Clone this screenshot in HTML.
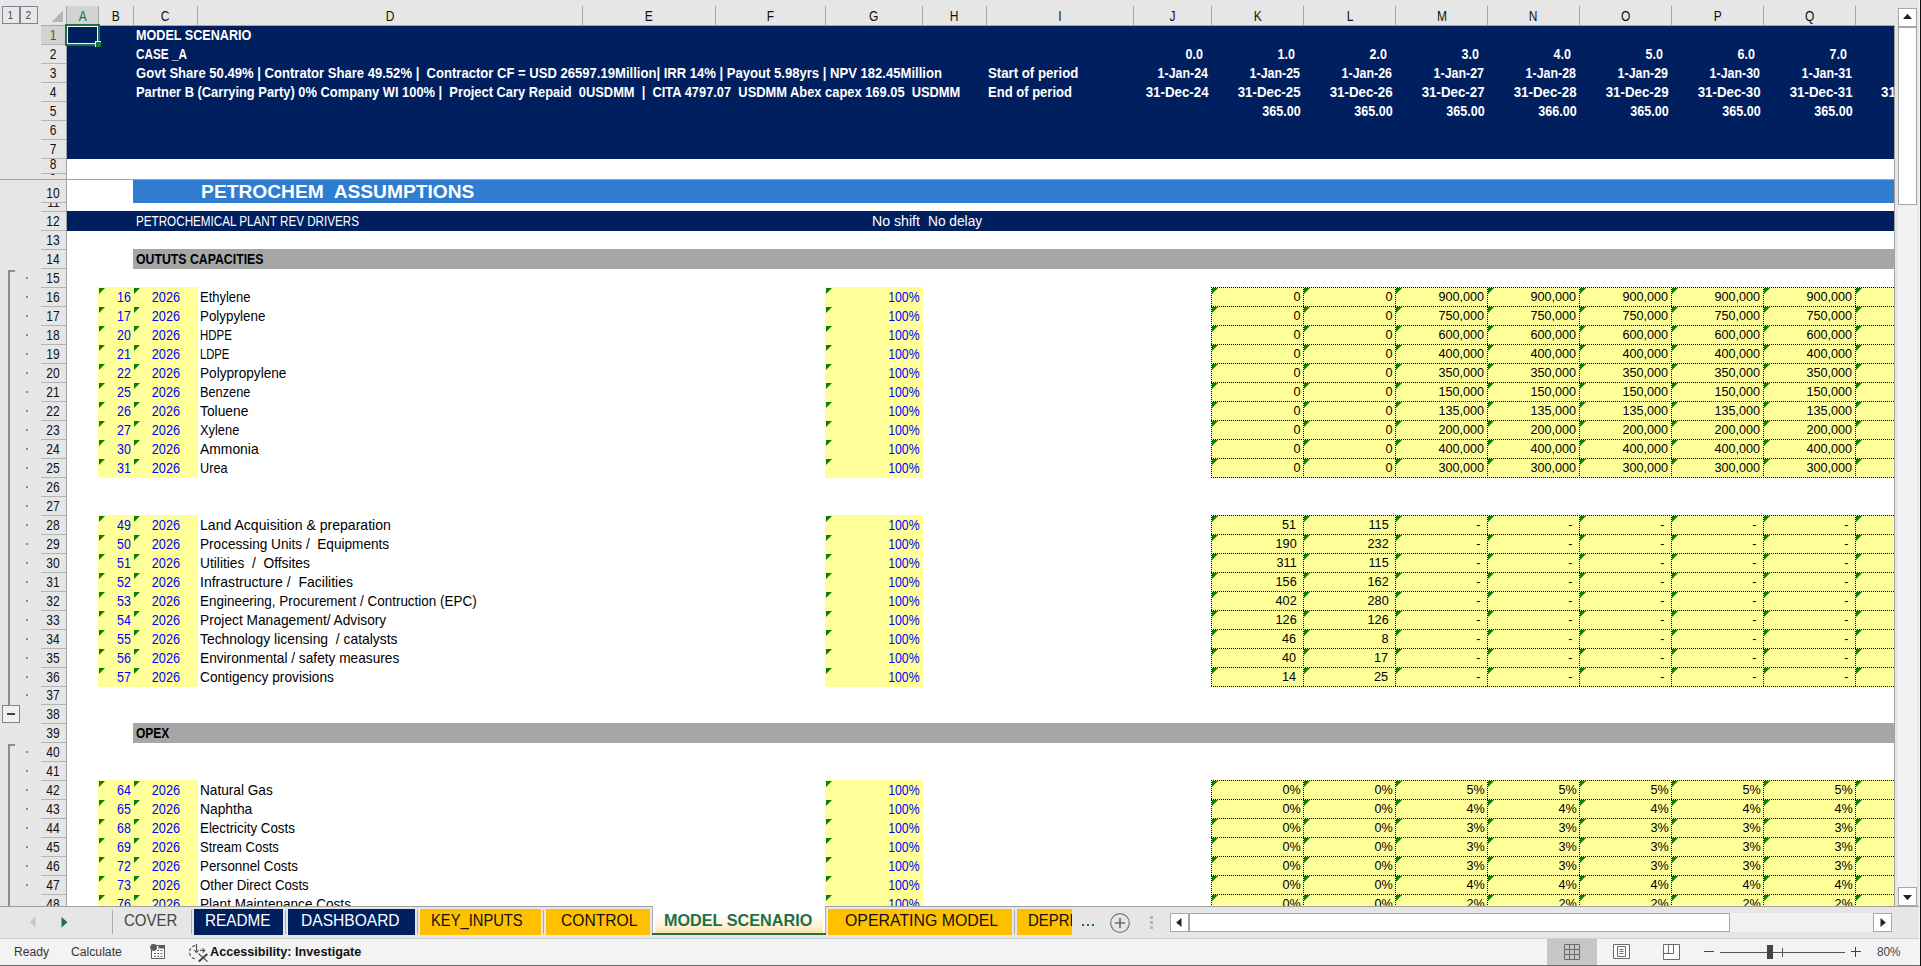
<!DOCTYPE html>
<html><head><meta charset="utf-8"><title>Model Scenario</title>
<style>
html,body{margin:0;padding:0}
body{width:1921px;height:966px;overflow:hidden;position:relative;background:#fff;font-family:"Liberation Sans",sans-serif}
div,span,svg,i{position:absolute;display:block}
.t{white-space:pre;line-height:1}
.dh{height:1px;background:repeating-linear-gradient(90deg,#000 0 1px,transparent 1px 2px)}
.dv{width:1px;background:repeating-linear-gradient(180deg,#000 0 1px,transparent 1px 2px)}
.g{width:0;height:0;border-top:6px solid #0a7d0a;border-right:6px solid transparent}
</style></head><body>
<div style="left:0px;top:0px;width:1921px;height:26px;background:#e6e6e6;"></div>
<div style="left:0px;top:26px;width:67px;height:880px;background:#e6e6e6;"></div>
<div style="left:67px;top:26px;width:1827px;height:133px;background:#001f5f;"></div>
<div style="left:133px;top:180px;width:1761px;height:23px;background:#2e7dd1;"></div>
<div style="left:67px;top:211px;width:1827px;height:20px;background:#001f5f;"></div>
<div style="left:133px;top:249px;width:1761px;height:20px;background:#a6a6a6;"></div>
<div style="left:133px;top:723px;width:1761px;height:20px;background:#a6a6a6;"></div>
<div style="left:98px;top:287px;width:100px;height:191px;background:#ffff99;"></div>
<div style="left:825px;top:287px;width:98px;height:191px;background:#ffff99;"></div>
<div style="left:1211px;top:287px;width:683px;height:191px;background:#ffff99;"></div>
<div style="left:98px;top:515px;width:100px;height:172px;background:#ffff99;"></div>
<div style="left:825px;top:515px;width:98px;height:172px;background:#ffff99;"></div>
<div style="left:1211px;top:515px;width:683px;height:172px;background:#ffff99;"></div>
<div style="left:98px;top:780px;width:100px;height:126px;background:#ffff99;"></div>
<div style="left:825px;top:780px;width:98px;height:126px;background:#ffff99;"></div>
<div style="left:1211px;top:780px;width:683px;height:126px;background:#ffff99;"></div>
<div class="dh" style="left:1211px;top:287px;width:683px"></div>
<div class="dh" style="left:1211px;top:306px;width:683px"></div>
<div class="dh" style="left:1211px;top:325px;width:683px"></div>
<div class="dh" style="left:1211px;top:344px;width:683px"></div>
<div class="dh" style="left:1211px;top:363px;width:683px"></div>
<div class="dh" style="left:1211px;top:382px;width:683px"></div>
<div class="dh" style="left:1211px;top:401px;width:683px"></div>
<div class="dh" style="left:1211px;top:420px;width:683px"></div>
<div class="dh" style="left:1211px;top:439px;width:683px"></div>
<div class="dh" style="left:1211px;top:458px;width:683px"></div>
<div class="dh" style="left:1211px;top:477px;width:683px"></div>
<div class="dv" style="left:1211px;top:287px;height:191px"></div>
<div class="dv" style="left:1303px;top:287px;height:191px"></div>
<div class="dv" style="left:1395px;top:287px;height:191px"></div>
<div class="dv" style="left:1487px;top:287px;height:191px"></div>
<div class="dv" style="left:1579px;top:287px;height:191px"></div>
<div class="dv" style="left:1671px;top:287px;height:191px"></div>
<div class="dv" style="left:1763px;top:287px;height:191px"></div>
<div class="dv" style="left:1855px;top:287px;height:191px"></div>
<div class="dh" style="left:1211px;top:515px;width:683px"></div>
<div class="dh" style="left:1211px;top:534px;width:683px"></div>
<div class="dh" style="left:1211px;top:553px;width:683px"></div>
<div class="dh" style="left:1211px;top:572px;width:683px"></div>
<div class="dh" style="left:1211px;top:591px;width:683px"></div>
<div class="dh" style="left:1211px;top:610px;width:683px"></div>
<div class="dh" style="left:1211px;top:629px;width:683px"></div>
<div class="dh" style="left:1211px;top:648px;width:683px"></div>
<div class="dh" style="left:1211px;top:667px;width:683px"></div>
<div class="dh" style="left:1211px;top:686px;width:683px"></div>
<div class="dv" style="left:1211px;top:515px;height:172px"></div>
<div class="dv" style="left:1303px;top:515px;height:172px"></div>
<div class="dv" style="left:1395px;top:515px;height:172px"></div>
<div class="dv" style="left:1487px;top:515px;height:172px"></div>
<div class="dv" style="left:1579px;top:515px;height:172px"></div>
<div class="dv" style="left:1671px;top:515px;height:172px"></div>
<div class="dv" style="left:1763px;top:515px;height:172px"></div>
<div class="dv" style="left:1855px;top:515px;height:172px"></div>
<div class="dh" style="left:1211px;top:780px;width:683px"></div>
<div class="dh" style="left:1211px;top:799px;width:683px"></div>
<div class="dh" style="left:1211px;top:818px;width:683px"></div>
<div class="dh" style="left:1211px;top:837px;width:683px"></div>
<div class="dh" style="left:1211px;top:856px;width:683px"></div>
<div class="dh" style="left:1211px;top:875px;width:683px"></div>
<div class="dh" style="left:1211px;top:894px;width:683px"></div>
<div class="dv" style="left:1211px;top:780px;height:126px"></div>
<div class="dv" style="left:1303px;top:780px;height:126px"></div>
<div class="dv" style="left:1395px;top:780px;height:126px"></div>
<div class="dv" style="left:1487px;top:780px;height:126px"></div>
<div class="dv" style="left:1579px;top:780px;height:126px"></div>
<div class="dv" style="left:1671px;top:780px;height:126px"></div>
<div class="dv" style="left:1763px;top:780px;height:126px"></div>
<div class="dv" style="left:1855px;top:780px;height:126px"></div>
<i class="g" style="left:99px;top:288px"></i>
<i class="g" style="left:134px;top:288px"></i>
<i class="g" style="left:826px;top:288px"></i>
<i class="g" style="left:1212px;top:288px"></i>
<i class="g" style="left:1304px;top:288px"></i>
<i class="g" style="left:1396px;top:288px"></i>
<i class="g" style="left:1488px;top:288px"></i>
<i class="g" style="left:1580px;top:288px"></i>
<i class="g" style="left:1672px;top:288px"></i>
<i class="g" style="left:1764px;top:288px"></i>
<i class="g" style="left:1856px;top:288px"></i>
<i class="g" style="left:99px;top:307px"></i>
<i class="g" style="left:134px;top:307px"></i>
<i class="g" style="left:826px;top:307px"></i>
<i class="g" style="left:1212px;top:307px"></i>
<i class="g" style="left:1304px;top:307px"></i>
<i class="g" style="left:1396px;top:307px"></i>
<i class="g" style="left:1488px;top:307px"></i>
<i class="g" style="left:1580px;top:307px"></i>
<i class="g" style="left:1672px;top:307px"></i>
<i class="g" style="left:1764px;top:307px"></i>
<i class="g" style="left:1856px;top:307px"></i>
<i class="g" style="left:99px;top:326px"></i>
<i class="g" style="left:134px;top:326px"></i>
<i class="g" style="left:826px;top:326px"></i>
<i class="g" style="left:1212px;top:326px"></i>
<i class="g" style="left:1304px;top:326px"></i>
<i class="g" style="left:1396px;top:326px"></i>
<i class="g" style="left:1488px;top:326px"></i>
<i class="g" style="left:1580px;top:326px"></i>
<i class="g" style="left:1672px;top:326px"></i>
<i class="g" style="left:1764px;top:326px"></i>
<i class="g" style="left:1856px;top:326px"></i>
<i class="g" style="left:99px;top:345px"></i>
<i class="g" style="left:134px;top:345px"></i>
<i class="g" style="left:826px;top:345px"></i>
<i class="g" style="left:1212px;top:345px"></i>
<i class="g" style="left:1304px;top:345px"></i>
<i class="g" style="left:1396px;top:345px"></i>
<i class="g" style="left:1488px;top:345px"></i>
<i class="g" style="left:1580px;top:345px"></i>
<i class="g" style="left:1672px;top:345px"></i>
<i class="g" style="left:1764px;top:345px"></i>
<i class="g" style="left:1856px;top:345px"></i>
<i class="g" style="left:99px;top:364px"></i>
<i class="g" style="left:134px;top:364px"></i>
<i class="g" style="left:826px;top:364px"></i>
<i class="g" style="left:1212px;top:364px"></i>
<i class="g" style="left:1304px;top:364px"></i>
<i class="g" style="left:1396px;top:364px"></i>
<i class="g" style="left:1488px;top:364px"></i>
<i class="g" style="left:1580px;top:364px"></i>
<i class="g" style="left:1672px;top:364px"></i>
<i class="g" style="left:1764px;top:364px"></i>
<i class="g" style="left:1856px;top:364px"></i>
<i class="g" style="left:99px;top:383px"></i>
<i class="g" style="left:134px;top:383px"></i>
<i class="g" style="left:826px;top:383px"></i>
<i class="g" style="left:1212px;top:383px"></i>
<i class="g" style="left:1304px;top:383px"></i>
<i class="g" style="left:1396px;top:383px"></i>
<i class="g" style="left:1488px;top:383px"></i>
<i class="g" style="left:1580px;top:383px"></i>
<i class="g" style="left:1672px;top:383px"></i>
<i class="g" style="left:1764px;top:383px"></i>
<i class="g" style="left:1856px;top:383px"></i>
<i class="g" style="left:99px;top:402px"></i>
<i class="g" style="left:134px;top:402px"></i>
<i class="g" style="left:826px;top:402px"></i>
<i class="g" style="left:1212px;top:402px"></i>
<i class="g" style="left:1304px;top:402px"></i>
<i class="g" style="left:1396px;top:402px"></i>
<i class="g" style="left:1488px;top:402px"></i>
<i class="g" style="left:1580px;top:402px"></i>
<i class="g" style="left:1672px;top:402px"></i>
<i class="g" style="left:1764px;top:402px"></i>
<i class="g" style="left:1856px;top:402px"></i>
<i class="g" style="left:99px;top:421px"></i>
<i class="g" style="left:134px;top:421px"></i>
<i class="g" style="left:826px;top:421px"></i>
<i class="g" style="left:1212px;top:421px"></i>
<i class="g" style="left:1304px;top:421px"></i>
<i class="g" style="left:1396px;top:421px"></i>
<i class="g" style="left:1488px;top:421px"></i>
<i class="g" style="left:1580px;top:421px"></i>
<i class="g" style="left:1672px;top:421px"></i>
<i class="g" style="left:1764px;top:421px"></i>
<i class="g" style="left:1856px;top:421px"></i>
<i class="g" style="left:99px;top:440px"></i>
<i class="g" style="left:134px;top:440px"></i>
<i class="g" style="left:826px;top:440px"></i>
<i class="g" style="left:1212px;top:440px"></i>
<i class="g" style="left:1304px;top:440px"></i>
<i class="g" style="left:1396px;top:440px"></i>
<i class="g" style="left:1488px;top:440px"></i>
<i class="g" style="left:1580px;top:440px"></i>
<i class="g" style="left:1672px;top:440px"></i>
<i class="g" style="left:1764px;top:440px"></i>
<i class="g" style="left:1856px;top:440px"></i>
<i class="g" style="left:99px;top:459px"></i>
<i class="g" style="left:134px;top:459px"></i>
<i class="g" style="left:826px;top:459px"></i>
<i class="g" style="left:1212px;top:459px"></i>
<i class="g" style="left:1304px;top:459px"></i>
<i class="g" style="left:1396px;top:459px"></i>
<i class="g" style="left:1488px;top:459px"></i>
<i class="g" style="left:1580px;top:459px"></i>
<i class="g" style="left:1672px;top:459px"></i>
<i class="g" style="left:1764px;top:459px"></i>
<i class="g" style="left:1856px;top:459px"></i>
<i class="g" style="left:99px;top:516px"></i>
<i class="g" style="left:134px;top:516px"></i>
<i class="g" style="left:826px;top:516px"></i>
<i class="g" style="left:1212px;top:516px"></i>
<i class="g" style="left:1304px;top:516px"></i>
<i class="g" style="left:1396px;top:516px"></i>
<i class="g" style="left:1488px;top:516px"></i>
<i class="g" style="left:1580px;top:516px"></i>
<i class="g" style="left:1672px;top:516px"></i>
<i class="g" style="left:1764px;top:516px"></i>
<i class="g" style="left:1856px;top:516px"></i>
<i class="g" style="left:99px;top:535px"></i>
<i class="g" style="left:134px;top:535px"></i>
<i class="g" style="left:826px;top:535px"></i>
<i class="g" style="left:1212px;top:535px"></i>
<i class="g" style="left:1304px;top:535px"></i>
<i class="g" style="left:1396px;top:535px"></i>
<i class="g" style="left:1488px;top:535px"></i>
<i class="g" style="left:1580px;top:535px"></i>
<i class="g" style="left:1672px;top:535px"></i>
<i class="g" style="left:1764px;top:535px"></i>
<i class="g" style="left:1856px;top:535px"></i>
<i class="g" style="left:99px;top:554px"></i>
<i class="g" style="left:134px;top:554px"></i>
<i class="g" style="left:826px;top:554px"></i>
<i class="g" style="left:1212px;top:554px"></i>
<i class="g" style="left:1304px;top:554px"></i>
<i class="g" style="left:1396px;top:554px"></i>
<i class="g" style="left:1488px;top:554px"></i>
<i class="g" style="left:1580px;top:554px"></i>
<i class="g" style="left:1672px;top:554px"></i>
<i class="g" style="left:1764px;top:554px"></i>
<i class="g" style="left:1856px;top:554px"></i>
<i class="g" style="left:99px;top:573px"></i>
<i class="g" style="left:134px;top:573px"></i>
<i class="g" style="left:826px;top:573px"></i>
<i class="g" style="left:1212px;top:573px"></i>
<i class="g" style="left:1304px;top:573px"></i>
<i class="g" style="left:1396px;top:573px"></i>
<i class="g" style="left:1488px;top:573px"></i>
<i class="g" style="left:1580px;top:573px"></i>
<i class="g" style="left:1672px;top:573px"></i>
<i class="g" style="left:1764px;top:573px"></i>
<i class="g" style="left:1856px;top:573px"></i>
<i class="g" style="left:99px;top:592px"></i>
<i class="g" style="left:134px;top:592px"></i>
<i class="g" style="left:826px;top:592px"></i>
<i class="g" style="left:1212px;top:592px"></i>
<i class="g" style="left:1304px;top:592px"></i>
<i class="g" style="left:1396px;top:592px"></i>
<i class="g" style="left:1488px;top:592px"></i>
<i class="g" style="left:1580px;top:592px"></i>
<i class="g" style="left:1672px;top:592px"></i>
<i class="g" style="left:1764px;top:592px"></i>
<i class="g" style="left:1856px;top:592px"></i>
<i class="g" style="left:99px;top:611px"></i>
<i class="g" style="left:134px;top:611px"></i>
<i class="g" style="left:826px;top:611px"></i>
<i class="g" style="left:1212px;top:611px"></i>
<i class="g" style="left:1304px;top:611px"></i>
<i class="g" style="left:1396px;top:611px"></i>
<i class="g" style="left:1488px;top:611px"></i>
<i class="g" style="left:1580px;top:611px"></i>
<i class="g" style="left:1672px;top:611px"></i>
<i class="g" style="left:1764px;top:611px"></i>
<i class="g" style="left:1856px;top:611px"></i>
<i class="g" style="left:99px;top:630px"></i>
<i class="g" style="left:134px;top:630px"></i>
<i class="g" style="left:826px;top:630px"></i>
<i class="g" style="left:1212px;top:630px"></i>
<i class="g" style="left:1304px;top:630px"></i>
<i class="g" style="left:1396px;top:630px"></i>
<i class="g" style="left:1488px;top:630px"></i>
<i class="g" style="left:1580px;top:630px"></i>
<i class="g" style="left:1672px;top:630px"></i>
<i class="g" style="left:1764px;top:630px"></i>
<i class="g" style="left:1856px;top:630px"></i>
<i class="g" style="left:99px;top:649px"></i>
<i class="g" style="left:134px;top:649px"></i>
<i class="g" style="left:826px;top:649px"></i>
<i class="g" style="left:1212px;top:649px"></i>
<i class="g" style="left:1304px;top:649px"></i>
<i class="g" style="left:1396px;top:649px"></i>
<i class="g" style="left:1488px;top:649px"></i>
<i class="g" style="left:1580px;top:649px"></i>
<i class="g" style="left:1672px;top:649px"></i>
<i class="g" style="left:1764px;top:649px"></i>
<i class="g" style="left:1856px;top:649px"></i>
<i class="g" style="left:99px;top:668px"></i>
<i class="g" style="left:134px;top:668px"></i>
<i class="g" style="left:826px;top:668px"></i>
<i class="g" style="left:1212px;top:668px"></i>
<i class="g" style="left:1304px;top:668px"></i>
<i class="g" style="left:1396px;top:668px"></i>
<i class="g" style="left:1488px;top:668px"></i>
<i class="g" style="left:1580px;top:668px"></i>
<i class="g" style="left:1672px;top:668px"></i>
<i class="g" style="left:1764px;top:668px"></i>
<i class="g" style="left:1856px;top:668px"></i>
<i class="g" style="left:99px;top:781px"></i>
<i class="g" style="left:134px;top:781px"></i>
<i class="g" style="left:826px;top:781px"></i>
<i class="g" style="left:1212px;top:781px"></i>
<i class="g" style="left:1304px;top:781px"></i>
<i class="g" style="left:1396px;top:781px"></i>
<i class="g" style="left:1488px;top:781px"></i>
<i class="g" style="left:1580px;top:781px"></i>
<i class="g" style="left:1672px;top:781px"></i>
<i class="g" style="left:1764px;top:781px"></i>
<i class="g" style="left:1856px;top:781px"></i>
<i class="g" style="left:99px;top:800px"></i>
<i class="g" style="left:134px;top:800px"></i>
<i class="g" style="left:826px;top:800px"></i>
<i class="g" style="left:1212px;top:800px"></i>
<i class="g" style="left:1304px;top:800px"></i>
<i class="g" style="left:1396px;top:800px"></i>
<i class="g" style="left:1488px;top:800px"></i>
<i class="g" style="left:1580px;top:800px"></i>
<i class="g" style="left:1672px;top:800px"></i>
<i class="g" style="left:1764px;top:800px"></i>
<i class="g" style="left:1856px;top:800px"></i>
<i class="g" style="left:99px;top:819px"></i>
<i class="g" style="left:134px;top:819px"></i>
<i class="g" style="left:826px;top:819px"></i>
<i class="g" style="left:1212px;top:819px"></i>
<i class="g" style="left:1304px;top:819px"></i>
<i class="g" style="left:1396px;top:819px"></i>
<i class="g" style="left:1488px;top:819px"></i>
<i class="g" style="left:1580px;top:819px"></i>
<i class="g" style="left:1672px;top:819px"></i>
<i class="g" style="left:1764px;top:819px"></i>
<i class="g" style="left:1856px;top:819px"></i>
<i class="g" style="left:99px;top:838px"></i>
<i class="g" style="left:134px;top:838px"></i>
<i class="g" style="left:826px;top:838px"></i>
<i class="g" style="left:1212px;top:838px"></i>
<i class="g" style="left:1304px;top:838px"></i>
<i class="g" style="left:1396px;top:838px"></i>
<i class="g" style="left:1488px;top:838px"></i>
<i class="g" style="left:1580px;top:838px"></i>
<i class="g" style="left:1672px;top:838px"></i>
<i class="g" style="left:1764px;top:838px"></i>
<i class="g" style="left:1856px;top:838px"></i>
<i class="g" style="left:99px;top:857px"></i>
<i class="g" style="left:134px;top:857px"></i>
<i class="g" style="left:826px;top:857px"></i>
<i class="g" style="left:1212px;top:857px"></i>
<i class="g" style="left:1304px;top:857px"></i>
<i class="g" style="left:1396px;top:857px"></i>
<i class="g" style="left:1488px;top:857px"></i>
<i class="g" style="left:1580px;top:857px"></i>
<i class="g" style="left:1672px;top:857px"></i>
<i class="g" style="left:1764px;top:857px"></i>
<i class="g" style="left:1856px;top:857px"></i>
<i class="g" style="left:99px;top:876px"></i>
<i class="g" style="left:134px;top:876px"></i>
<i class="g" style="left:826px;top:876px"></i>
<i class="g" style="left:1212px;top:876px"></i>
<i class="g" style="left:1304px;top:876px"></i>
<i class="g" style="left:1396px;top:876px"></i>
<i class="g" style="left:1488px;top:876px"></i>
<i class="g" style="left:1580px;top:876px"></i>
<i class="g" style="left:1672px;top:876px"></i>
<i class="g" style="left:1764px;top:876px"></i>
<i class="g" style="left:1856px;top:876px"></i>
<i class="g" style="left:99px;top:895px"></i>
<i class="g" style="left:134px;top:895px"></i>
<i class="g" style="left:826px;top:895px"></i>
<i class="g" style="left:1212px;top:895px"></i>
<i class="g" style="left:1304px;top:895px"></i>
<i class="g" style="left:1396px;top:895px"></i>
<i class="g" style="left:1488px;top:895px"></i>
<i class="g" style="left:1580px;top:895px"></i>
<i class="g" style="left:1672px;top:895px"></i>
<i class="g" style="left:1764px;top:895px"></i>
<i class="g" style="left:1856px;top:895px"></i>
<div style="left:67px;top:6px;width:31px;height:18px;background:#d2d2d2;"></div>
<div style="left:66px;top:6px;width:1px;height:19px;background:#a6a6a6"></div>
<div style="left:98px;top:6px;width:1px;height:19px;background:#a6a6a6"></div>
<div style="left:133px;top:6px;width:1px;height:19px;background:#a6a6a6"></div>
<div style="left:197px;top:6px;width:1px;height:19px;background:#a6a6a6"></div>
<div style="left:582px;top:6px;width:1px;height:19px;background:#a6a6a6"></div>
<div style="left:715px;top:6px;width:1px;height:19px;background:#a6a6a6"></div>
<div style="left:825px;top:6px;width:1px;height:19px;background:#a6a6a6"></div>
<div style="left:922px;top:6px;width:1px;height:19px;background:#a6a6a6"></div>
<div style="left:986px;top:6px;width:1px;height:19px;background:#a6a6a6"></div>
<div style="left:1133px;top:6px;width:1px;height:19px;background:#a6a6a6"></div>
<div style="left:1211px;top:6px;width:1px;height:19px;background:#a6a6a6"></div>
<div style="left:1303px;top:6px;width:1px;height:19px;background:#a6a6a6"></div>
<div style="left:1395px;top:6px;width:1px;height:19px;background:#a6a6a6"></div>
<div style="left:1487px;top:6px;width:1px;height:19px;background:#a6a6a6"></div>
<div style="left:1579px;top:6px;width:1px;height:19px;background:#a6a6a6"></div>
<div style="left:1671px;top:6px;width:1px;height:19px;background:#a6a6a6"></div>
<div style="left:1763px;top:6px;width:1px;height:19px;background:#a6a6a6"></div>
<div style="left:1855px;top:6px;width:1px;height:19px;background:#a6a6a6"></div>
<div style="left:41px;top:25px;width:1853px;height:1px;background:#a6a6a6"></div>
<span class="t" style="top:8.89px;font-size:14.3px;color:#1e7145;left:77.75px;transform-origin:50% 0;transform:scaleX(0.8400);">A</span>
<span class="t" style="top:8.89px;font-size:14.3px;color:#111;left:111.25px;transform-origin:50% 0;transform:scaleX(0.8400);">B</span>
<span class="t" style="top:8.89px;font-size:14.3px;color:#111;left:160.37px;transform-origin:50% 0;transform:scaleX(0.8400);">C</span>
<span class="t" style="top:8.89px;font-size:14.3px;color:#111;left:384.87px;transform-origin:50% 0;transform:scaleX(0.8400);">D</span>
<span class="t" style="top:8.89px;font-size:14.3px;color:#111;left:644.25px;transform-origin:50% 0;transform:scaleX(0.8400);">E</span>
<span class="t" style="top:8.89px;font-size:14.3px;color:#111;left:766.13px;transform-origin:50% 0;transform:scaleX(0.8400);">F</span>
<span class="t" style="top:8.89px;font-size:14.3px;color:#111;left:868.44px;transform-origin:50% 0;transform:scaleX(0.8400);">G</span>
<span class="t" style="top:8.89px;font-size:14.3px;color:#111;left:949.37px;transform-origin:50% 0;transform:scaleX(0.8400);">H</span>
<span class="t" style="top:8.89px;font-size:14.3px;color:#111;left:1058.00px;transform-origin:50% 0;transform:scaleX(0.8400);">I</span>
<span class="t" style="top:8.89px;font-size:14.3px;color:#111;left:1168.94px;transform-origin:50% 0;transform:scaleX(0.8400);">J</span>
<span class="t" style="top:8.89px;font-size:14.3px;color:#111;left:1252.75px;transform-origin:50% 0;transform:scaleX(0.8400);">K</span>
<span class="t" style="top:8.89px;font-size:14.3px;color:#111;left:1345.56px;transform-origin:50% 0;transform:scaleX(0.8400);">L</span>
<span class="t" style="top:8.89px;font-size:14.3px;color:#111;left:1435.56px;transform-origin:50% 0;transform:scaleX(0.8400);">M</span>
<span class="t" style="top:8.89px;font-size:14.3px;color:#111;left:1528.37px;transform-origin:50% 0;transform:scaleX(0.8400);">N</span>
<span class="t" style="top:8.89px;font-size:14.3px;color:#111;left:1619.94px;transform-origin:50% 0;transform:scaleX(0.8400);">O</span>
<span class="t" style="top:8.89px;font-size:14.3px;color:#111;left:1712.75px;transform-origin:50% 0;transform:scaleX(0.8400);">P</span>
<span class="t" style="top:8.89px;font-size:14.3px;color:#111;left:1803.94px;transform-origin:50% 0;transform:scaleX(0.8400);">Q</span>
<svg style="left:50px;top:9px" width="14" height="14"><path d="M13 1.5V13H1.5Z" fill="#b4b4b4"/></svg>
<div style="left:2px;top:6px;width:16px;height:16px;border:1px solid #7f8494;background:#e8e8e8"></div>
<span class="t" style="top:10.26px;font-size:11.5px;color:#4a4a4a;left:7.41px;transform-origin:50% 0;transform:scaleX(0.8800);">1</span>
<div style="left:20px;top:6px;width:16px;height:16px;border:1px solid #7f8494;background:#e8e8e8"></div>
<span class="t" style="top:10.26px;font-size:11.5px;color:#4a4a4a;left:25.41px;transform-origin:50% 0;transform:scaleX(0.8800);">2</span>
<div style="left:41px;top:26px;width:25px;height:18px;background:#d2d2d2;"></div>
<div style="left:41px;top:44px;width:25px;height:1px;background:#b4b4b4"></div>
<div style="left:41px;top:63px;width:25px;height:1px;background:#b4b4b4"></div>
<div style="left:41px;top:82px;width:25px;height:1px;background:#b4b4b4"></div>
<div style="left:41px;top:101px;width:25px;height:1px;background:#b4b4b4"></div>
<div style="left:41px;top:120px;width:25px;height:1px;background:#b4b4b4"></div>
<div style="left:41px;top:139px;width:25px;height:1px;background:#b4b4b4"></div>
<div style="left:41px;top:158px;width:25px;height:1px;background:#b4b4b4"></div>
<div style="left:41px;top:173px;width:25px;height:1px;background:#b4b4b4"></div>
<div style="left:41px;top:202px;width:25px;height:1px;background:#b4b4b4"></div>
<div style="left:41px;top:211px;width:25px;height:1px;background:#b4b4b4"></div>
<div style="left:41px;top:230px;width:25px;height:1px;background:#b4b4b4"></div>
<div style="left:41px;top:249px;width:25px;height:1px;background:#b4b4b4"></div>
<div style="left:41px;top:268px;width:25px;height:1px;background:#b4b4b4"></div>
<div style="left:41px;top:287px;width:25px;height:1px;background:#b4b4b4"></div>
<div style="left:41px;top:306px;width:25px;height:1px;background:#b4b4b4"></div>
<div style="left:41px;top:325px;width:25px;height:1px;background:#b4b4b4"></div>
<div style="left:41px;top:344px;width:25px;height:1px;background:#b4b4b4"></div>
<div style="left:41px;top:363px;width:25px;height:1px;background:#b4b4b4"></div>
<div style="left:41px;top:382px;width:25px;height:1px;background:#b4b4b4"></div>
<div style="left:41px;top:401px;width:25px;height:1px;background:#b4b4b4"></div>
<div style="left:41px;top:420px;width:25px;height:1px;background:#b4b4b4"></div>
<div style="left:41px;top:439px;width:25px;height:1px;background:#b4b4b4"></div>
<div style="left:41px;top:458px;width:25px;height:1px;background:#b4b4b4"></div>
<div style="left:41px;top:477px;width:25px;height:1px;background:#b4b4b4"></div>
<div style="left:41px;top:496px;width:25px;height:1px;background:#b4b4b4"></div>
<div style="left:41px;top:515px;width:25px;height:1px;background:#b4b4b4"></div>
<div style="left:41px;top:534px;width:25px;height:1px;background:#b4b4b4"></div>
<div style="left:41px;top:553px;width:25px;height:1px;background:#b4b4b4"></div>
<div style="left:41px;top:572px;width:25px;height:1px;background:#b4b4b4"></div>
<div style="left:41px;top:591px;width:25px;height:1px;background:#b4b4b4"></div>
<div style="left:41px;top:610px;width:25px;height:1px;background:#b4b4b4"></div>
<div style="left:41px;top:629px;width:25px;height:1px;background:#b4b4b4"></div>
<div style="left:41px;top:648px;width:25px;height:1px;background:#b4b4b4"></div>
<div style="left:41px;top:667px;width:25px;height:1px;background:#b4b4b4"></div>
<div style="left:41px;top:686px;width:25px;height:1px;background:#b4b4b4"></div>
<div style="left:41px;top:704px;width:25px;height:1px;background:#b4b4b4"></div>
<div style="left:41px;top:723px;width:25px;height:1px;background:#b4b4b4"></div>
<div style="left:41px;top:742px;width:25px;height:1px;background:#b4b4b4"></div>
<div style="left:41px;top:761px;width:25px;height:1px;background:#b4b4b4"></div>
<div style="left:41px;top:780px;width:25px;height:1px;background:#b4b4b4"></div>
<div style="left:41px;top:799px;width:25px;height:1px;background:#b4b4b4"></div>
<div style="left:41px;top:818px;width:25px;height:1px;background:#b4b4b4"></div>
<div style="left:41px;top:837px;width:25px;height:1px;background:#b4b4b4"></div>
<div style="left:41px;top:856px;width:25px;height:1px;background:#b4b4b4"></div>
<div style="left:41px;top:875px;width:25px;height:1px;background:#b4b4b4"></div>
<div style="left:41px;top:894px;width:25px;height:1px;background:#b4b4b4"></div>
<div style="left:66px;top:26px;width:1px;height:880px;background:#a0a0a0"></div>
<div style="left:41px;top:26px;width:25px;height:880px;overflow:hidden;">
<span class="t" style="top:1.69px;font-size:14.3px;color:#1e7145;left:8.06px;transform-origin:50% 0;transform:scaleX(0.8400);">1</span>
<span class="t" style="top:20.69px;font-size:14.3px;color:#111;left:8.06px;transform-origin:50% 0;transform:scaleX(0.8400);">2</span>
<span class="t" style="top:39.69px;font-size:14.3px;color:#111;left:8.06px;transform-origin:50% 0;transform:scaleX(0.8400);">3</span>
<span class="t" style="top:58.69px;font-size:14.3px;color:#111;left:8.06px;transform-origin:50% 0;transform:scaleX(0.8400);">4</span>
<span class="t" style="top:77.69px;font-size:14.3px;color:#111;left:8.06px;transform-origin:50% 0;transform:scaleX(0.8400);">5</span>
<span class="t" style="top:96.69px;font-size:14.3px;color:#111;left:8.06px;transform-origin:50% 0;transform:scaleX(0.8400);">6</span>
<span class="t" style="top:115.69px;font-size:14.3px;color:#111;left:8.06px;transform-origin:50% 0;transform:scaleX(0.8400);">7</span>
<span class="t" style="top:130.69px;font-size:14.3px;color:#111;left:8.06px;transform-origin:50% 0;transform:scaleX(0.8400);">8</span>
<span class="t" style="top:159.69px;font-size:14.3px;color:#111;left:4.06px;transform-origin:50% 0;transform:scaleX(0.8400);">10</span>
<span class="t" style="top:187.69px;font-size:14.3px;color:#111;left:4.06px;transform-origin:50% 0;transform:scaleX(0.8400);">12</span>
<span class="t" style="top:206.69px;font-size:14.3px;color:#111;left:4.06px;transform-origin:50% 0;transform:scaleX(0.8400);">13</span>
<span class="t" style="top:225.69px;font-size:14.3px;color:#111;left:4.06px;transform-origin:50% 0;transform:scaleX(0.8400);">14</span>
<span class="t" style="top:244.69px;font-size:14.3px;color:#111;left:4.06px;transform-origin:50% 0;transform:scaleX(0.8400);">15</span>
<span class="t" style="top:263.69px;font-size:14.3px;color:#111;left:4.06px;transform-origin:50% 0;transform:scaleX(0.8400);">16</span>
<span class="t" style="top:282.69px;font-size:14.3px;color:#111;left:4.06px;transform-origin:50% 0;transform:scaleX(0.8400);">17</span>
<span class="t" style="top:301.69px;font-size:14.3px;color:#111;left:4.06px;transform-origin:50% 0;transform:scaleX(0.8400);">18</span>
<span class="t" style="top:320.69px;font-size:14.3px;color:#111;left:4.06px;transform-origin:50% 0;transform:scaleX(0.8400);">19</span>
<span class="t" style="top:339.69px;font-size:14.3px;color:#111;left:4.06px;transform-origin:50% 0;transform:scaleX(0.8400);">20</span>
<span class="t" style="top:358.69px;font-size:14.3px;color:#111;left:4.06px;transform-origin:50% 0;transform:scaleX(0.8400);">21</span>
<span class="t" style="top:377.69px;font-size:14.3px;color:#111;left:4.06px;transform-origin:50% 0;transform:scaleX(0.8400);">22</span>
<span class="t" style="top:396.69px;font-size:14.3px;color:#111;left:4.06px;transform-origin:50% 0;transform:scaleX(0.8400);">23</span>
<span class="t" style="top:415.69px;font-size:14.3px;color:#111;left:4.06px;transform-origin:50% 0;transform:scaleX(0.8400);">24</span>
<span class="t" style="top:434.69px;font-size:14.3px;color:#111;left:4.06px;transform-origin:50% 0;transform:scaleX(0.8400);">25</span>
<span class="t" style="top:453.69px;font-size:14.3px;color:#111;left:4.06px;transform-origin:50% 0;transform:scaleX(0.8400);">26</span>
<span class="t" style="top:472.69px;font-size:14.3px;color:#111;left:4.06px;transform-origin:50% 0;transform:scaleX(0.8400);">27</span>
<span class="t" style="top:491.69px;font-size:14.3px;color:#111;left:4.06px;transform-origin:50% 0;transform:scaleX(0.8400);">28</span>
<span class="t" style="top:510.69px;font-size:14.3px;color:#111;left:4.06px;transform-origin:50% 0;transform:scaleX(0.8400);">29</span>
<span class="t" style="top:529.69px;font-size:14.3px;color:#111;left:4.06px;transform-origin:50% 0;transform:scaleX(0.8400);">30</span>
<span class="t" style="top:548.69px;font-size:14.3px;color:#111;left:4.06px;transform-origin:50% 0;transform:scaleX(0.8400);">31</span>
<span class="t" style="top:567.69px;font-size:14.3px;color:#111;left:4.06px;transform-origin:50% 0;transform:scaleX(0.8400);">32</span>
<span class="t" style="top:586.69px;font-size:14.3px;color:#111;left:4.06px;transform-origin:50% 0;transform:scaleX(0.8400);">33</span>
<span class="t" style="top:605.69px;font-size:14.3px;color:#111;left:4.06px;transform-origin:50% 0;transform:scaleX(0.8400);">34</span>
<span class="t" style="top:624.69px;font-size:14.3px;color:#111;left:4.06px;transform-origin:50% 0;transform:scaleX(0.8400);">35</span>
<span class="t" style="top:643.69px;font-size:14.3px;color:#111;left:4.06px;transform-origin:50% 0;transform:scaleX(0.8400);">36</span>
<span class="t" style="top:661.69px;font-size:14.3px;color:#111;left:4.06px;transform-origin:50% 0;transform:scaleX(0.8400);">37</span>
<span class="t" style="top:680.69px;font-size:14.3px;color:#111;left:4.06px;transform-origin:50% 0;transform:scaleX(0.8400);">38</span>
<span class="t" style="top:699.69px;font-size:14.3px;color:#111;left:4.06px;transform-origin:50% 0;transform:scaleX(0.8400);">39</span>
<span class="t" style="top:718.69px;font-size:14.3px;color:#111;left:4.06px;transform-origin:50% 0;transform:scaleX(0.8400);">40</span>
<span class="t" style="top:737.69px;font-size:14.3px;color:#111;left:4.06px;transform-origin:50% 0;transform:scaleX(0.8400);">41</span>
<span class="t" style="top:756.69px;font-size:14.3px;color:#111;left:4.06px;transform-origin:50% 0;transform:scaleX(0.8400);">42</span>
<span class="t" style="top:775.69px;font-size:14.3px;color:#111;left:4.06px;transform-origin:50% 0;transform:scaleX(0.8400);">43</span>
<span class="t" style="top:794.69px;font-size:14.3px;color:#111;left:4.06px;transform-origin:50% 0;transform:scaleX(0.8400);">44</span>
<span class="t" style="top:813.69px;font-size:14.3px;color:#111;left:4.06px;transform-origin:50% 0;transform:scaleX(0.8400);">45</span>
<span class="t" style="top:832.69px;font-size:14.3px;color:#111;left:4.06px;transform-origin:50% 0;transform:scaleX(0.8400);">46</span>
<span class="t" style="top:851.69px;font-size:14.3px;color:#111;left:4.06px;transform-origin:50% 0;transform:scaleX(0.8400);">47</span>
<span class="t" style="top:870.69px;font-size:14.3px;color:#111;left:4.06px;transform-origin:50% 0;transform:scaleX(0.8400);">48</span>
</div>
<div style="left:41px;top:203px;width:25px;height:8px;overflow:hidden;">
<span class="t" style="top:-8.31px;font-size:14.3px;color:#222;left:4.62px;transform-origin:50% 0;transform:scaleX(0.8400);">11</span>
</div>
<div style="left:41px;top:174px;width:25px;height:5px;overflow:hidden;">
<span class="t" style="top:-10.91px;font-size:14.3px;color:#222;left:8.06px;transform-origin:50% 0;transform:scaleX(0.8400);">9</span>
</div>
<div style="left:0;top:179px;width:1894px;height:1px;background:#a0a0a0"></div>
<div style="left:8px;top:270px;width:2px;height:435px;background:#8c8c8c;"></div>
<div style="left:8px;top:270px;width:7px;height:2px;background:#8c8c8c;"></div>
<div style="left:8px;top:744px;width:2px;height:162px;background:#8c8c8c;"></div>
<div style="left:8px;top:744px;width:7px;height:2px;background:#8c8c8c;"></div>
<div style="left:2px;top:705px;width:16px;height:16px;border:1px solid #7f8494;background:#f0f0f0"></div>
<div style="left:7px;top:713px;width:8px;height:2px;background:#444;"></div>
<div style="left:26px;top:277px;width:2px;height:2px;background:#8c8c8c;"></div>
<div style="left:26px;top:296px;width:2px;height:2px;background:#8c8c8c;"></div>
<div style="left:26px;top:315px;width:2px;height:2px;background:#8c8c8c;"></div>
<div style="left:26px;top:334px;width:2px;height:2px;background:#8c8c8c;"></div>
<div style="left:26px;top:353px;width:2px;height:2px;background:#8c8c8c;"></div>
<div style="left:26px;top:372px;width:2px;height:2px;background:#8c8c8c;"></div>
<div style="left:26px;top:391px;width:2px;height:2px;background:#8c8c8c;"></div>
<div style="left:26px;top:410px;width:2px;height:2px;background:#8c8c8c;"></div>
<div style="left:26px;top:429px;width:2px;height:2px;background:#8c8c8c;"></div>
<div style="left:26px;top:448px;width:2px;height:2px;background:#8c8c8c;"></div>
<div style="left:26px;top:467px;width:2px;height:2px;background:#8c8c8c;"></div>
<div style="left:26px;top:486px;width:2px;height:2px;background:#8c8c8c;"></div>
<div style="left:26px;top:505px;width:2px;height:2px;background:#8c8c8c;"></div>
<div style="left:26px;top:524px;width:2px;height:2px;background:#8c8c8c;"></div>
<div style="left:26px;top:543px;width:2px;height:2px;background:#8c8c8c;"></div>
<div style="left:26px;top:562px;width:2px;height:2px;background:#8c8c8c;"></div>
<div style="left:26px;top:581px;width:2px;height:2px;background:#8c8c8c;"></div>
<div style="left:26px;top:600px;width:2px;height:2px;background:#8c8c8c;"></div>
<div style="left:26px;top:619px;width:2px;height:2px;background:#8c8c8c;"></div>
<div style="left:26px;top:638px;width:2px;height:2px;background:#8c8c8c;"></div>
<div style="left:26px;top:657px;width:2px;height:2px;background:#8c8c8c;"></div>
<div style="left:26px;top:676px;width:2px;height:2px;background:#8c8c8c;"></div>
<div style="left:26px;top:694px;width:2px;height:2px;background:#8c8c8c;"></div>
<div style="left:26px;top:751px;width:2px;height:2px;background:#8c8c8c;"></div>
<div style="left:26px;top:770px;width:2px;height:2px;background:#8c8c8c;"></div>
<div style="left:26px;top:789px;width:2px;height:2px;background:#8c8c8c;"></div>
<div style="left:26px;top:808px;width:2px;height:2px;background:#8c8c8c;"></div>
<div style="left:26px;top:827px;width:2px;height:2px;background:#8c8c8c;"></div>
<div style="left:26px;top:846px;width:2px;height:2px;background:#8c8c8c;"></div>
<div style="left:26px;top:865px;width:2px;height:2px;background:#8c8c8c;"></div>
<div style="left:26px;top:884px;width:2px;height:2px;background:#8c8c8c;"></div>
<div style="left:67px;top:26px;width:1827px;height:880px;overflow:hidden;">
<span class="t" style="top:1.89px;font-size:14.3px;color:#fff;font-weight:700;left:69.10px;transform-origin:0 0;transform:scaleX(0.8821);">MODEL SCENARIO</span>
<span class="t" style="top:20.89px;font-size:14.3px;color:#fff;font-weight:700;left:69.10px;transform-origin:0 0;transform:scaleX(0.8227);">CASE _A</span>
<span class="t" style="top:39.89px;font-size:14.3px;color:#fff;font-weight:700;left:69.10px;transform-origin:0 0;transform:scaleX(0.9140);">Govt Share 50.49% | Contrator Share 49.52% |  Contractor CF = USD 26597.19Million| IRR 14% | Payout 5.98yrs | NPV 182.45Million</span>
<span class="t" style="top:58.89px;font-size:14.3px;color:#fff;font-weight:700;left:69.10px;transform-origin:0 0;transform:scaleX(0.9003);">Partner B (Carrying Party) 0% Company WI 100% |  Project Cary Repaid  0USDMM  |  CITA 4797.07  USDMM Abex capex 169.05  USDMM</span>
<span class="t" style="top:39.89px;font-size:14.3px;color:#fff;font-weight:700;left:921.40px;transform-origin:0 0;transform:scaleX(0.9243);">Start of period</span>
<span class="t" style="top:58.89px;font-size:14.3px;color:#fff;font-weight:700;left:921.40px;transform-origin:0 0;transform:scaleX(0.9110);">End of period</span>
<span class="t" style="top:20.89px;font-size:14.3px;color:#fff;font-weight:700;right:690.75px;transform-origin:100% 0;transform:scaleX(0.8759);">0.0</span>
<span class="t" style="top:39.89px;font-size:14.3px;color:#fff;font-weight:700;right:685.54px;transform-origin:100% 0;transform:scaleX(0.8691);">1-Jan-24</span>
<span class="t" style="top:58.89px;font-size:14.3px;color:#fff;font-weight:700;right:685.53px;transform-origin:100% 0;transform:scaleX(0.9306);">31-Dec-24</span>
<span class="t" style="top:20.89px;font-size:14.3px;color:#fff;font-weight:700;right:598.75px;transform-origin:100% 0;transform:scaleX(0.8759);">1.0</span>
<span class="t" style="top:39.89px;font-size:14.3px;color:#fff;font-weight:700;right:593.54px;transform-origin:100% 0;transform:scaleX(0.8691);">1-Jan-25</span>
<span class="t" style="top:58.89px;font-size:14.3px;color:#fff;font-weight:700;right:593.53px;transform-origin:100% 0;transform:scaleX(0.9306);">31-Dec-25</span>
<span class="t" style="top:77.89px;font-size:14.3px;color:#fff;font-weight:700;right:593.63px;transform-origin:100% 0;transform:scaleX(0.8779);">365.00</span>
<span class="t" style="top:20.89px;font-size:14.3px;color:#fff;font-weight:700;right:506.75px;transform-origin:100% 0;transform:scaleX(0.8759);">2.0</span>
<span class="t" style="top:39.89px;font-size:14.3px;color:#fff;font-weight:700;right:501.54px;transform-origin:100% 0;transform:scaleX(0.8691);">1-Jan-26</span>
<span class="t" style="top:58.89px;font-size:14.3px;color:#fff;font-weight:700;right:501.53px;transform-origin:100% 0;transform:scaleX(0.9306);">31-Dec-26</span>
<span class="t" style="top:77.89px;font-size:14.3px;color:#fff;font-weight:700;right:501.63px;transform-origin:100% 0;transform:scaleX(0.8779);">365.00</span>
<span class="t" style="top:20.89px;font-size:14.3px;color:#fff;font-weight:700;right:414.75px;transform-origin:100% 0;transform:scaleX(0.8759);">3.0</span>
<span class="t" style="top:39.89px;font-size:14.3px;color:#fff;font-weight:700;right:409.54px;transform-origin:100% 0;transform:scaleX(0.8691);">1-Jan-27</span>
<span class="t" style="top:58.89px;font-size:14.3px;color:#fff;font-weight:700;right:409.53px;transform-origin:100% 0;transform:scaleX(0.9306);">31-Dec-27</span>
<span class="t" style="top:77.89px;font-size:14.3px;color:#fff;font-weight:700;right:409.63px;transform-origin:100% 0;transform:scaleX(0.8779);">365.00</span>
<span class="t" style="top:20.89px;font-size:14.3px;color:#fff;font-weight:700;right:322.75px;transform-origin:100% 0;transform:scaleX(0.8759);">4.0</span>
<span class="t" style="top:39.89px;font-size:14.3px;color:#fff;font-weight:700;right:317.54px;transform-origin:100% 0;transform:scaleX(0.8691);">1-Jan-28</span>
<span class="t" style="top:58.89px;font-size:14.3px;color:#fff;font-weight:700;right:317.53px;transform-origin:100% 0;transform:scaleX(0.9306);">31-Dec-28</span>
<span class="t" style="top:77.89px;font-size:14.3px;color:#fff;font-weight:700;right:317.63px;transform-origin:100% 0;transform:scaleX(0.8779);">366.00</span>
<span class="t" style="top:20.89px;font-size:14.3px;color:#fff;font-weight:700;right:230.75px;transform-origin:100% 0;transform:scaleX(0.8759);">5.0</span>
<span class="t" style="top:39.89px;font-size:14.3px;color:#fff;font-weight:700;right:225.54px;transform-origin:100% 0;transform:scaleX(0.8691);">1-Jan-29</span>
<span class="t" style="top:58.89px;font-size:14.3px;color:#fff;font-weight:700;right:225.53px;transform-origin:100% 0;transform:scaleX(0.9306);">31-Dec-29</span>
<span class="t" style="top:77.89px;font-size:14.3px;color:#fff;font-weight:700;right:225.63px;transform-origin:100% 0;transform:scaleX(0.8779);">365.00</span>
<span class="t" style="top:20.89px;font-size:14.3px;color:#fff;font-weight:700;right:138.75px;transform-origin:100% 0;transform:scaleX(0.8759);">6.0</span>
<span class="t" style="top:39.89px;font-size:14.3px;color:#fff;font-weight:700;right:133.54px;transform-origin:100% 0;transform:scaleX(0.8691);">1-Jan-30</span>
<span class="t" style="top:58.89px;font-size:14.3px;color:#fff;font-weight:700;right:133.53px;transform-origin:100% 0;transform:scaleX(0.9306);">31-Dec-30</span>
<span class="t" style="top:77.89px;font-size:14.3px;color:#fff;font-weight:700;right:133.63px;transform-origin:100% 0;transform:scaleX(0.8779);">365.00</span>
<span class="t" style="top:20.89px;font-size:14.3px;color:#fff;font-weight:700;right:46.75px;transform-origin:100% 0;transform:scaleX(0.8759);">7.0</span>
<span class="t" style="top:39.89px;font-size:14.3px;color:#fff;font-weight:700;right:41.54px;transform-origin:100% 0;transform:scaleX(0.8691);">1-Jan-31</span>
<span class="t" style="top:58.89px;font-size:14.3px;color:#fff;font-weight:700;right:41.53px;transform-origin:100% 0;transform:scaleX(0.9306);">31-Dec-31</span>
<span class="t" style="top:77.89px;font-size:14.3px;color:#fff;font-weight:700;right:41.63px;transform-origin:100% 0;transform:scaleX(0.8779);">365.00</span>
<span class="t" style="top:58.89px;font-size:14.3px;color:#fff;font-weight:700;left:1814.00px;transform-origin:0 0;transform:scaleX(0.9306);">31-Dec-32</span>
<span class="t" style="top:155.94px;font-size:19.2px;color:#fff;font-weight:700;left:134.10px;transform-origin:0 0;">PETROCHEM  ASSUMPTIONS</span>
<span class="t" style="top:187.89px;font-size:14.3px;color:#fff;left:69.10px;transform-origin:0 0;transform:scaleX(0.8162);">PETROCHEMICAL PLANT REV DRIVERS</span>
<span class="t" style="top:187.89px;font-size:14.3px;color:#fff;left:804.70px;transform-origin:0 0;transform:scaleX(0.9886);">No shift</span>
<span class="t" style="top:187.89px;font-size:14.3px;color:#fff;left:860.70px;transform-origin:0 0;transform:scaleX(0.9600);">No delay</span>
<span class="t" style="top:225.89px;font-size:14.3px;color:#000;font-weight:700;left:69.10px;transform-origin:0 0;transform:scaleX(0.8596);">OUTUTS CAPACITIES</span>
<span class="t" style="top:699.89px;font-size:14.3px;color:#000;font-weight:700;left:68.80px;transform-origin:0 0;transform:scaleX(0.8379);">OPEX</span>
<span class="t" style="top:263.89px;font-size:14.3px;color:#0000ff;right:1763.32px;transform-origin:100% 0;transform:scaleX(0.8700);">16</span>
<span class="t" style="top:263.89px;font-size:14.3px;color:#0000ff;left:82.73px;transform-origin:50% 0;transform:scaleX(0.8882);">2026</span>
<span class="t" style="top:263.89px;font-size:14.3px;color:#000;left:133.20px;transform-origin:0 0;transform:scaleX(0.9045);">Ethylene</span>
<span class="t" style="top:263.89px;font-size:14.3px;color:#0000ff;right:974.25px;transform-origin:100% 0;transform:scaleX(0.8575);">100%</span>
<span class="t" style="top:264.48px;font-size:13.6px;color:#000;right:593.64px;transform-origin:100% 0;transform:scaleX(0.9300);">0</span>
<span class="t" style="top:264.48px;font-size:13.6px;color:#000;right:501.64px;transform-origin:100% 0;transform:scaleX(0.9300);">0</span>
<span class="t" style="top:264.48px;font-size:13.6px;color:#000;right:409.60px;transform-origin:100% 0;transform:scaleX(0.9300);">900,000</span>
<span class="t" style="top:264.48px;font-size:13.6px;color:#000;right:317.60px;transform-origin:100% 0;transform:scaleX(0.9300);">900,000</span>
<span class="t" style="top:264.48px;font-size:13.6px;color:#000;right:225.60px;transform-origin:100% 0;transform:scaleX(0.9300);">900,000</span>
<span class="t" style="top:264.48px;font-size:13.6px;color:#000;right:133.60px;transform-origin:100% 0;transform:scaleX(0.9300);">900,000</span>
<span class="t" style="top:264.48px;font-size:13.6px;color:#000;right:41.60px;transform-origin:100% 0;transform:scaleX(0.9300);">900,000</span>
<span class="t" style="top:282.89px;font-size:14.3px;color:#0000ff;right:1763.32px;transform-origin:100% 0;transform:scaleX(0.8700);">17</span>
<span class="t" style="top:282.89px;font-size:14.3px;color:#0000ff;left:82.73px;transform-origin:50% 0;transform:scaleX(0.8882);">2026</span>
<span class="t" style="top:282.89px;font-size:14.3px;color:#000;left:133.20px;transform-origin:0 0;transform:scaleX(0.9348);">Polypylene</span>
<span class="t" style="top:282.89px;font-size:14.3px;color:#0000ff;right:974.25px;transform-origin:100% 0;transform:scaleX(0.8575);">100%</span>
<span class="t" style="top:283.48px;font-size:13.6px;color:#000;right:593.64px;transform-origin:100% 0;transform:scaleX(0.9300);">0</span>
<span class="t" style="top:283.48px;font-size:13.6px;color:#000;right:501.64px;transform-origin:100% 0;transform:scaleX(0.9300);">0</span>
<span class="t" style="top:283.48px;font-size:13.6px;color:#000;right:409.60px;transform-origin:100% 0;transform:scaleX(0.9300);">750,000</span>
<span class="t" style="top:283.48px;font-size:13.6px;color:#000;right:317.60px;transform-origin:100% 0;transform:scaleX(0.9300);">750,000</span>
<span class="t" style="top:283.48px;font-size:13.6px;color:#000;right:225.60px;transform-origin:100% 0;transform:scaleX(0.9300);">750,000</span>
<span class="t" style="top:283.48px;font-size:13.6px;color:#000;right:133.60px;transform-origin:100% 0;transform:scaleX(0.9300);">750,000</span>
<span class="t" style="top:283.48px;font-size:13.6px;color:#000;right:41.60px;transform-origin:100% 0;transform:scaleX(0.9300);">750,000</span>
<span class="t" style="top:301.89px;font-size:14.3px;color:#0000ff;right:1763.32px;transform-origin:100% 0;transform:scaleX(0.8700);">20</span>
<span class="t" style="top:301.89px;font-size:14.3px;color:#0000ff;left:82.73px;transform-origin:50% 0;transform:scaleX(0.8882);">2026</span>
<span class="t" style="top:301.89px;font-size:14.3px;color:#000;left:133.20px;transform-origin:0 0;transform:scaleX(0.8000);">HDPE</span>
<span class="t" style="top:301.89px;font-size:14.3px;color:#0000ff;right:974.25px;transform-origin:100% 0;transform:scaleX(0.8575);">100%</span>
<span class="t" style="top:302.48px;font-size:13.6px;color:#000;right:593.64px;transform-origin:100% 0;transform:scaleX(0.9300);">0</span>
<span class="t" style="top:302.48px;font-size:13.6px;color:#000;right:501.64px;transform-origin:100% 0;transform:scaleX(0.9300);">0</span>
<span class="t" style="top:302.48px;font-size:13.6px;color:#000;right:409.60px;transform-origin:100% 0;transform:scaleX(0.9300);">600,000</span>
<span class="t" style="top:302.48px;font-size:13.6px;color:#000;right:317.60px;transform-origin:100% 0;transform:scaleX(0.9300);">600,000</span>
<span class="t" style="top:302.48px;font-size:13.6px;color:#000;right:225.60px;transform-origin:100% 0;transform:scaleX(0.9300);">600,000</span>
<span class="t" style="top:302.48px;font-size:13.6px;color:#000;right:133.60px;transform-origin:100% 0;transform:scaleX(0.9300);">600,000</span>
<span class="t" style="top:302.48px;font-size:13.6px;color:#000;right:41.60px;transform-origin:100% 0;transform:scaleX(0.9300);">600,000</span>
<span class="t" style="top:320.89px;font-size:14.3px;color:#0000ff;right:1763.32px;transform-origin:100% 0;transform:scaleX(0.8700);">21</span>
<span class="t" style="top:320.89px;font-size:14.3px;color:#0000ff;left:82.73px;transform-origin:50% 0;transform:scaleX(0.8882);">2026</span>
<span class="t" style="top:320.89px;font-size:14.3px;color:#000;left:133.20px;transform-origin:0 0;transform:scaleX(0.7839);">LDPE</span>
<span class="t" style="top:320.89px;font-size:14.3px;color:#0000ff;right:974.25px;transform-origin:100% 0;transform:scaleX(0.8575);">100%</span>
<span class="t" style="top:321.48px;font-size:13.6px;color:#000;right:593.64px;transform-origin:100% 0;transform:scaleX(0.9300);">0</span>
<span class="t" style="top:321.48px;font-size:13.6px;color:#000;right:501.64px;transform-origin:100% 0;transform:scaleX(0.9300);">0</span>
<span class="t" style="top:321.48px;font-size:13.6px;color:#000;right:409.60px;transform-origin:100% 0;transform:scaleX(0.9300);">400,000</span>
<span class="t" style="top:321.48px;font-size:13.6px;color:#000;right:317.60px;transform-origin:100% 0;transform:scaleX(0.9300);">400,000</span>
<span class="t" style="top:321.48px;font-size:13.6px;color:#000;right:225.60px;transform-origin:100% 0;transform:scaleX(0.9300);">400,000</span>
<span class="t" style="top:321.48px;font-size:13.6px;color:#000;right:133.60px;transform-origin:100% 0;transform:scaleX(0.9300);">400,000</span>
<span class="t" style="top:321.48px;font-size:13.6px;color:#000;right:41.60px;transform-origin:100% 0;transform:scaleX(0.9300);">400,000</span>
<span class="t" style="top:339.89px;font-size:14.3px;color:#0000ff;right:1763.32px;transform-origin:100% 0;transform:scaleX(0.8700);">22</span>
<span class="t" style="top:339.89px;font-size:14.3px;color:#0000ff;left:82.73px;transform-origin:50% 0;transform:scaleX(0.8882);">2026</span>
<span class="t" style="top:339.89px;font-size:14.3px;color:#000;left:133.20px;transform-origin:0 0;transform:scaleX(0.9538);">Polypropylene</span>
<span class="t" style="top:339.89px;font-size:14.3px;color:#0000ff;right:974.25px;transform-origin:100% 0;transform:scaleX(0.8575);">100%</span>
<span class="t" style="top:340.48px;font-size:13.6px;color:#000;right:593.64px;transform-origin:100% 0;transform:scaleX(0.9300);">0</span>
<span class="t" style="top:340.48px;font-size:13.6px;color:#000;right:501.64px;transform-origin:100% 0;transform:scaleX(0.9300);">0</span>
<span class="t" style="top:340.48px;font-size:13.6px;color:#000;right:409.60px;transform-origin:100% 0;transform:scaleX(0.9300);">350,000</span>
<span class="t" style="top:340.48px;font-size:13.6px;color:#000;right:317.60px;transform-origin:100% 0;transform:scaleX(0.9300);">350,000</span>
<span class="t" style="top:340.48px;font-size:13.6px;color:#000;right:225.60px;transform-origin:100% 0;transform:scaleX(0.9300);">350,000</span>
<span class="t" style="top:340.48px;font-size:13.6px;color:#000;right:133.60px;transform-origin:100% 0;transform:scaleX(0.9300);">350,000</span>
<span class="t" style="top:340.48px;font-size:13.6px;color:#000;right:41.60px;transform-origin:100% 0;transform:scaleX(0.9300);">350,000</span>
<span class="t" style="top:358.89px;font-size:14.3px;color:#0000ff;right:1763.32px;transform-origin:100% 0;transform:scaleX(0.8700);">25</span>
<span class="t" style="top:358.89px;font-size:14.3px;color:#0000ff;left:82.73px;transform-origin:50% 0;transform:scaleX(0.8882);">2026</span>
<span class="t" style="top:358.89px;font-size:14.3px;color:#000;left:133.20px;transform-origin:0 0;transform:scaleX(0.8924);">Benzene</span>
<span class="t" style="top:358.89px;font-size:14.3px;color:#0000ff;right:974.25px;transform-origin:100% 0;transform:scaleX(0.8575);">100%</span>
<span class="t" style="top:359.48px;font-size:13.6px;color:#000;right:593.64px;transform-origin:100% 0;transform:scaleX(0.9300);">0</span>
<span class="t" style="top:359.48px;font-size:13.6px;color:#000;right:501.64px;transform-origin:100% 0;transform:scaleX(0.9300);">0</span>
<span class="t" style="top:359.48px;font-size:13.6px;color:#000;right:409.60px;transform-origin:100% 0;transform:scaleX(0.9300);">150,000</span>
<span class="t" style="top:359.48px;font-size:13.6px;color:#000;right:317.60px;transform-origin:100% 0;transform:scaleX(0.9300);">150,000</span>
<span class="t" style="top:359.48px;font-size:13.6px;color:#000;right:225.60px;transform-origin:100% 0;transform:scaleX(0.9300);">150,000</span>
<span class="t" style="top:359.48px;font-size:13.6px;color:#000;right:133.60px;transform-origin:100% 0;transform:scaleX(0.9300);">150,000</span>
<span class="t" style="top:359.48px;font-size:13.6px;color:#000;right:41.60px;transform-origin:100% 0;transform:scaleX(0.9300);">150,000</span>
<span class="t" style="top:377.89px;font-size:14.3px;color:#0000ff;right:1763.32px;transform-origin:100% 0;transform:scaleX(0.8700);">26</span>
<span class="t" style="top:377.89px;font-size:14.3px;color:#0000ff;left:82.73px;transform-origin:50% 0;transform:scaleX(0.8882);">2026</span>
<span class="t" style="top:377.89px;font-size:14.3px;color:#000;left:133.20px;transform-origin:0 0;transform:scaleX(0.9664);">Toluene</span>
<span class="t" style="top:377.89px;font-size:14.3px;color:#0000ff;right:974.25px;transform-origin:100% 0;transform:scaleX(0.8575);">100%</span>
<span class="t" style="top:378.48px;font-size:13.6px;color:#000;right:593.64px;transform-origin:100% 0;transform:scaleX(0.9300);">0</span>
<span class="t" style="top:378.48px;font-size:13.6px;color:#000;right:501.64px;transform-origin:100% 0;transform:scaleX(0.9300);">0</span>
<span class="t" style="top:378.48px;font-size:13.6px;color:#000;right:409.60px;transform-origin:100% 0;transform:scaleX(0.9300);">135,000</span>
<span class="t" style="top:378.48px;font-size:13.6px;color:#000;right:317.60px;transform-origin:100% 0;transform:scaleX(0.9300);">135,000</span>
<span class="t" style="top:378.48px;font-size:13.6px;color:#000;right:225.60px;transform-origin:100% 0;transform:scaleX(0.9300);">135,000</span>
<span class="t" style="top:378.48px;font-size:13.6px;color:#000;right:133.60px;transform-origin:100% 0;transform:scaleX(0.9300);">135,000</span>
<span class="t" style="top:378.48px;font-size:13.6px;color:#000;right:41.60px;transform-origin:100% 0;transform:scaleX(0.9300);">135,000</span>
<span class="t" style="top:396.89px;font-size:14.3px;color:#0000ff;right:1763.32px;transform-origin:100% 0;transform:scaleX(0.8700);">27</span>
<span class="t" style="top:396.89px;font-size:14.3px;color:#0000ff;left:82.73px;transform-origin:50% 0;transform:scaleX(0.8882);">2026</span>
<span class="t" style="top:396.89px;font-size:14.3px;color:#000;left:133.20px;transform-origin:0 0;transform:scaleX(0.8986);">Xylene</span>
<span class="t" style="top:396.89px;font-size:14.3px;color:#0000ff;right:974.25px;transform-origin:100% 0;transform:scaleX(0.8575);">100%</span>
<span class="t" style="top:397.48px;font-size:13.6px;color:#000;right:593.64px;transform-origin:100% 0;transform:scaleX(0.9300);">0</span>
<span class="t" style="top:397.48px;font-size:13.6px;color:#000;right:501.64px;transform-origin:100% 0;transform:scaleX(0.9300);">0</span>
<span class="t" style="top:397.48px;font-size:13.6px;color:#000;right:409.60px;transform-origin:100% 0;transform:scaleX(0.9300);">200,000</span>
<span class="t" style="top:397.48px;font-size:13.6px;color:#000;right:317.60px;transform-origin:100% 0;transform:scaleX(0.9300);">200,000</span>
<span class="t" style="top:397.48px;font-size:13.6px;color:#000;right:225.60px;transform-origin:100% 0;transform:scaleX(0.9300);">200,000</span>
<span class="t" style="top:397.48px;font-size:13.6px;color:#000;right:133.60px;transform-origin:100% 0;transform:scaleX(0.9300);">200,000</span>
<span class="t" style="top:397.48px;font-size:13.6px;color:#000;right:41.60px;transform-origin:100% 0;transform:scaleX(0.9300);">200,000</span>
<span class="t" style="top:415.89px;font-size:14.3px;color:#0000ff;right:1763.32px;transform-origin:100% 0;transform:scaleX(0.8700);">30</span>
<span class="t" style="top:415.89px;font-size:14.3px;color:#0000ff;left:82.73px;transform-origin:50% 0;transform:scaleX(0.8882);">2026</span>
<span class="t" style="top:415.89px;font-size:14.3px;color:#000;left:133.20px;transform-origin:0 0;transform:scaleX(0.9710);">Ammonia</span>
<span class="t" style="top:415.89px;font-size:14.3px;color:#0000ff;right:974.25px;transform-origin:100% 0;transform:scaleX(0.8575);">100%</span>
<span class="t" style="top:416.48px;font-size:13.6px;color:#000;right:593.64px;transform-origin:100% 0;transform:scaleX(0.9300);">0</span>
<span class="t" style="top:416.48px;font-size:13.6px;color:#000;right:501.64px;transform-origin:100% 0;transform:scaleX(0.9300);">0</span>
<span class="t" style="top:416.48px;font-size:13.6px;color:#000;right:409.60px;transform-origin:100% 0;transform:scaleX(0.9300);">400,000</span>
<span class="t" style="top:416.48px;font-size:13.6px;color:#000;right:317.60px;transform-origin:100% 0;transform:scaleX(0.9300);">400,000</span>
<span class="t" style="top:416.48px;font-size:13.6px;color:#000;right:225.60px;transform-origin:100% 0;transform:scaleX(0.9300);">400,000</span>
<span class="t" style="top:416.48px;font-size:13.6px;color:#000;right:133.60px;transform-origin:100% 0;transform:scaleX(0.9300);">400,000</span>
<span class="t" style="top:416.48px;font-size:13.6px;color:#000;right:41.60px;transform-origin:100% 0;transform:scaleX(0.9300);">400,000</span>
<span class="t" style="top:434.89px;font-size:14.3px;color:#0000ff;right:1763.32px;transform-origin:100% 0;transform:scaleX(0.8700);">31</span>
<span class="t" style="top:434.89px;font-size:14.3px;color:#0000ff;left:82.73px;transform-origin:50% 0;transform:scaleX(0.8882);">2026</span>
<span class="t" style="top:434.89px;font-size:14.3px;color:#000;left:133.20px;transform-origin:0 0;transform:scaleX(0.8871);">Urea</span>
<span class="t" style="top:434.89px;font-size:14.3px;color:#0000ff;right:974.25px;transform-origin:100% 0;transform:scaleX(0.8575);">100%</span>
<span class="t" style="top:435.48px;font-size:13.6px;color:#000;right:593.64px;transform-origin:100% 0;transform:scaleX(0.9300);">0</span>
<span class="t" style="top:435.48px;font-size:13.6px;color:#000;right:501.64px;transform-origin:100% 0;transform:scaleX(0.9300);">0</span>
<span class="t" style="top:435.48px;font-size:13.6px;color:#000;right:409.60px;transform-origin:100% 0;transform:scaleX(0.9300);">300,000</span>
<span class="t" style="top:435.48px;font-size:13.6px;color:#000;right:317.60px;transform-origin:100% 0;transform:scaleX(0.9300);">300,000</span>
<span class="t" style="top:435.48px;font-size:13.6px;color:#000;right:225.60px;transform-origin:100% 0;transform:scaleX(0.9300);">300,000</span>
<span class="t" style="top:435.48px;font-size:13.6px;color:#000;right:133.60px;transform-origin:100% 0;transform:scaleX(0.9300);">300,000</span>
<span class="t" style="top:435.48px;font-size:13.6px;color:#000;right:41.60px;transform-origin:100% 0;transform:scaleX(0.9300);">300,000</span>
<span class="t" style="top:491.89px;font-size:14.3px;color:#0000ff;right:1763.32px;transform-origin:100% 0;transform:scaleX(0.8700);">49</span>
<span class="t" style="top:491.89px;font-size:14.3px;color:#0000ff;left:82.73px;transform-origin:50% 0;transform:scaleX(0.8882);">2026</span>
<span class="t" style="top:491.89px;font-size:14.3px;color:#000;left:133.20px;transform-origin:0 0;transform:scaleX(0.9842);">Land Acquisition &amp; preparation</span>
<span class="t" style="top:491.89px;font-size:14.3px;color:#0000ff;right:974.25px;transform-origin:100% 0;transform:scaleX(0.8575);">100%</span>
<span class="t" style="top:492.48px;font-size:13.6px;color:#000;right:597.57px;transform-origin:100% 0;transform:scaleX(0.9300);">51</span>
<span class="t" style="top:492.48px;font-size:13.6px;color:#000;right:505.63px;transform-origin:100% 0;transform:scaleX(0.9300);">115</span>
<span class="t" style="top:492.48px;font-size:13.6px;color:#000;right:413.07px;transform-origin:100% 0;transform:scaleX(0.9300);">-</span>
<span class="t" style="top:492.48px;font-size:13.6px;color:#000;right:321.07px;transform-origin:100% 0;transform:scaleX(0.9300);">-</span>
<span class="t" style="top:492.48px;font-size:13.6px;color:#000;right:229.07px;transform-origin:100% 0;transform:scaleX(0.9300);">-</span>
<span class="t" style="top:492.48px;font-size:13.6px;color:#000;right:137.07px;transform-origin:100% 0;transform:scaleX(0.9300);">-</span>
<span class="t" style="top:492.48px;font-size:13.6px;color:#000;right:45.07px;transform-origin:100% 0;transform:scaleX(0.9300);">-</span>
<span class="t" style="top:510.89px;font-size:14.3px;color:#0000ff;right:1763.32px;transform-origin:100% 0;transform:scaleX(0.8700);">50</span>
<span class="t" style="top:510.89px;font-size:14.3px;color:#0000ff;left:82.73px;transform-origin:50% 0;transform:scaleX(0.8882);">2026</span>
<span class="t" style="top:510.89px;font-size:14.3px;color:#000;left:133.20px;transform-origin:0 0;transform:scaleX(0.9520);">Processing Units /  Equipments</span>
<span class="t" style="top:510.89px;font-size:14.3px;color:#0000ff;right:974.25px;transform-origin:100% 0;transform:scaleX(0.8575);">100%</span>
<span class="t" style="top:511.48px;font-size:13.6px;color:#000;right:597.61px;transform-origin:100% 0;transform:scaleX(0.9300);">190</span>
<span class="t" style="top:511.48px;font-size:13.6px;color:#000;right:505.61px;transform-origin:100% 0;transform:scaleX(0.9300);">232</span>
<span class="t" style="top:511.48px;font-size:13.6px;color:#000;right:413.07px;transform-origin:100% 0;transform:scaleX(0.9300);">-</span>
<span class="t" style="top:511.48px;font-size:13.6px;color:#000;right:321.07px;transform-origin:100% 0;transform:scaleX(0.9300);">-</span>
<span class="t" style="top:511.48px;font-size:13.6px;color:#000;right:229.07px;transform-origin:100% 0;transform:scaleX(0.9300);">-</span>
<span class="t" style="top:511.48px;font-size:13.6px;color:#000;right:137.07px;transform-origin:100% 0;transform:scaleX(0.9300);">-</span>
<span class="t" style="top:511.48px;font-size:13.6px;color:#000;right:45.07px;transform-origin:100% 0;transform:scaleX(0.9300);">-</span>
<span class="t" style="top:529.89px;font-size:14.3px;color:#0000ff;right:1763.32px;transform-origin:100% 0;transform:scaleX(0.8700);">51</span>
<span class="t" style="top:529.89px;font-size:14.3px;color:#0000ff;left:82.73px;transform-origin:50% 0;transform:scaleX(0.8882);">2026</span>
<span class="t" style="top:529.89px;font-size:14.3px;color:#000;left:133.20px;transform-origin:0 0;transform:scaleX(0.9626);">Utilities  /  Offsites</span>
<span class="t" style="top:529.89px;font-size:14.3px;color:#0000ff;right:974.25px;transform-origin:100% 0;transform:scaleX(0.8575);">100%</span>
<span class="t" style="top:530.48px;font-size:13.6px;color:#000;right:597.63px;transform-origin:100% 0;transform:scaleX(0.9300);">311</span>
<span class="t" style="top:530.48px;font-size:13.6px;color:#000;right:505.63px;transform-origin:100% 0;transform:scaleX(0.9300);">115</span>
<span class="t" style="top:530.48px;font-size:13.6px;color:#000;right:413.07px;transform-origin:100% 0;transform:scaleX(0.9300);">-</span>
<span class="t" style="top:530.48px;font-size:13.6px;color:#000;right:321.07px;transform-origin:100% 0;transform:scaleX(0.9300);">-</span>
<span class="t" style="top:530.48px;font-size:13.6px;color:#000;right:229.07px;transform-origin:100% 0;transform:scaleX(0.9300);">-</span>
<span class="t" style="top:530.48px;font-size:13.6px;color:#000;right:137.07px;transform-origin:100% 0;transform:scaleX(0.9300);">-</span>
<span class="t" style="top:530.48px;font-size:13.6px;color:#000;right:45.07px;transform-origin:100% 0;transform:scaleX(0.9300);">-</span>
<span class="t" style="top:548.89px;font-size:14.3px;color:#0000ff;right:1763.32px;transform-origin:100% 0;transform:scaleX(0.8700);">52</span>
<span class="t" style="top:548.89px;font-size:14.3px;color:#0000ff;left:82.73px;transform-origin:50% 0;transform:scaleX(0.8882);">2026</span>
<span class="t" style="top:548.89px;font-size:14.3px;color:#000;left:133.20px;transform-origin:0 0;transform:scaleX(0.9829);">Infrastructure /  Facilities</span>
<span class="t" style="top:548.89px;font-size:14.3px;color:#0000ff;right:974.25px;transform-origin:100% 0;transform:scaleX(0.8575);">100%</span>
<span class="t" style="top:549.48px;font-size:13.6px;color:#000;right:597.61px;transform-origin:100% 0;transform:scaleX(0.9300);">156</span>
<span class="t" style="top:549.48px;font-size:13.6px;color:#000;right:505.61px;transform-origin:100% 0;transform:scaleX(0.9300);">162</span>
<span class="t" style="top:549.48px;font-size:13.6px;color:#000;right:413.07px;transform-origin:100% 0;transform:scaleX(0.9300);">-</span>
<span class="t" style="top:549.48px;font-size:13.6px;color:#000;right:321.07px;transform-origin:100% 0;transform:scaleX(0.9300);">-</span>
<span class="t" style="top:549.48px;font-size:13.6px;color:#000;right:229.07px;transform-origin:100% 0;transform:scaleX(0.9300);">-</span>
<span class="t" style="top:549.48px;font-size:13.6px;color:#000;right:137.07px;transform-origin:100% 0;transform:scaleX(0.9300);">-</span>
<span class="t" style="top:549.48px;font-size:13.6px;color:#000;right:45.07px;transform-origin:100% 0;transform:scaleX(0.9300);">-</span>
<span class="t" style="top:567.89px;font-size:14.3px;color:#0000ff;right:1763.32px;transform-origin:100% 0;transform:scaleX(0.8700);">53</span>
<span class="t" style="top:567.89px;font-size:14.3px;color:#0000ff;left:82.73px;transform-origin:50% 0;transform:scaleX(0.8882);">2026</span>
<span class="t" style="top:567.89px;font-size:14.3px;color:#000;left:133.20px;transform-origin:0 0;transform:scaleX(0.9409);">Engineering, Procurement / Contruction (EPC)</span>
<span class="t" style="top:567.89px;font-size:14.3px;color:#0000ff;right:974.25px;transform-origin:100% 0;transform:scaleX(0.8575);">100%</span>
<span class="t" style="top:568.48px;font-size:13.6px;color:#000;right:597.61px;transform-origin:100% 0;transform:scaleX(0.9300);">402</span>
<span class="t" style="top:568.48px;font-size:13.6px;color:#000;right:505.61px;transform-origin:100% 0;transform:scaleX(0.9300);">280</span>
<span class="t" style="top:568.48px;font-size:13.6px;color:#000;right:413.07px;transform-origin:100% 0;transform:scaleX(0.9300);">-</span>
<span class="t" style="top:568.48px;font-size:13.6px;color:#000;right:321.07px;transform-origin:100% 0;transform:scaleX(0.9300);">-</span>
<span class="t" style="top:568.48px;font-size:13.6px;color:#000;right:229.07px;transform-origin:100% 0;transform:scaleX(0.9300);">-</span>
<span class="t" style="top:568.48px;font-size:13.6px;color:#000;right:137.07px;transform-origin:100% 0;transform:scaleX(0.9300);">-</span>
<span class="t" style="top:568.48px;font-size:13.6px;color:#000;right:45.07px;transform-origin:100% 0;transform:scaleX(0.9300);">-</span>
<span class="t" style="top:586.89px;font-size:14.3px;color:#0000ff;right:1763.32px;transform-origin:100% 0;transform:scaleX(0.8700);">54</span>
<span class="t" style="top:586.89px;font-size:14.3px;color:#0000ff;left:82.73px;transform-origin:50% 0;transform:scaleX(0.8882);">2026</span>
<span class="t" style="top:586.89px;font-size:14.3px;color:#000;left:133.20px;transform-origin:0 0;transform:scaleX(0.9604);">Project Management/ Advisory</span>
<span class="t" style="top:586.89px;font-size:14.3px;color:#0000ff;right:974.25px;transform-origin:100% 0;transform:scaleX(0.8575);">100%</span>
<span class="t" style="top:587.48px;font-size:13.6px;color:#000;right:597.61px;transform-origin:100% 0;transform:scaleX(0.9300);">126</span>
<span class="t" style="top:587.48px;font-size:13.6px;color:#000;right:505.61px;transform-origin:100% 0;transform:scaleX(0.9300);">126</span>
<span class="t" style="top:587.48px;font-size:13.6px;color:#000;right:413.07px;transform-origin:100% 0;transform:scaleX(0.9300);">-</span>
<span class="t" style="top:587.48px;font-size:13.6px;color:#000;right:321.07px;transform-origin:100% 0;transform:scaleX(0.9300);">-</span>
<span class="t" style="top:587.48px;font-size:13.6px;color:#000;right:229.07px;transform-origin:100% 0;transform:scaleX(0.9300);">-</span>
<span class="t" style="top:587.48px;font-size:13.6px;color:#000;right:137.07px;transform-origin:100% 0;transform:scaleX(0.9300);">-</span>
<span class="t" style="top:587.48px;font-size:13.6px;color:#000;right:45.07px;transform-origin:100% 0;transform:scaleX(0.9300);">-</span>
<span class="t" style="top:605.89px;font-size:14.3px;color:#0000ff;right:1763.32px;transform-origin:100% 0;transform:scaleX(0.8700);">55</span>
<span class="t" style="top:605.89px;font-size:14.3px;color:#0000ff;left:82.73px;transform-origin:50% 0;transform:scaleX(0.8882);">2026</span>
<span class="t" style="top:605.89px;font-size:14.3px;color:#000;left:133.20px;transform-origin:0 0;transform:scaleX(0.9707);">Technology licensing  / catalysts</span>
<span class="t" style="top:605.89px;font-size:14.3px;color:#0000ff;right:974.25px;transform-origin:100% 0;transform:scaleX(0.8575);">100%</span>
<span class="t" style="top:606.48px;font-size:13.6px;color:#000;right:597.57px;transform-origin:100% 0;transform:scaleX(0.9300);">46</span>
<span class="t" style="top:606.48px;font-size:13.6px;color:#000;right:505.64px;transform-origin:100% 0;transform:scaleX(0.9300);">8</span>
<span class="t" style="top:606.48px;font-size:13.6px;color:#000;right:413.07px;transform-origin:100% 0;transform:scaleX(0.9300);">-</span>
<span class="t" style="top:606.48px;font-size:13.6px;color:#000;right:321.07px;transform-origin:100% 0;transform:scaleX(0.9300);">-</span>
<span class="t" style="top:606.48px;font-size:13.6px;color:#000;right:229.07px;transform-origin:100% 0;transform:scaleX(0.9300);">-</span>
<span class="t" style="top:606.48px;font-size:13.6px;color:#000;right:137.07px;transform-origin:100% 0;transform:scaleX(0.9300);">-</span>
<span class="t" style="top:606.48px;font-size:13.6px;color:#000;right:45.07px;transform-origin:100% 0;transform:scaleX(0.9300);">-</span>
<span class="t" style="top:624.89px;font-size:14.3px;color:#0000ff;right:1763.32px;transform-origin:100% 0;transform:scaleX(0.8700);">56</span>
<span class="t" style="top:624.89px;font-size:14.3px;color:#0000ff;left:82.73px;transform-origin:50% 0;transform:scaleX(0.8882);">2026</span>
<span class="t" style="top:624.89px;font-size:14.3px;color:#000;left:133.20px;transform-origin:0 0;transform:scaleX(0.9571);">Environmental / safety measures</span>
<span class="t" style="top:624.89px;font-size:14.3px;color:#0000ff;right:974.25px;transform-origin:100% 0;transform:scaleX(0.8575);">100%</span>
<span class="t" style="top:625.48px;font-size:13.6px;color:#000;right:597.57px;transform-origin:100% 0;transform:scaleX(0.9300);">40</span>
<span class="t" style="top:625.48px;font-size:13.6px;color:#000;right:505.57px;transform-origin:100% 0;transform:scaleX(0.9300);">17</span>
<span class="t" style="top:625.48px;font-size:13.6px;color:#000;right:413.07px;transform-origin:100% 0;transform:scaleX(0.9300);">-</span>
<span class="t" style="top:625.48px;font-size:13.6px;color:#000;right:321.07px;transform-origin:100% 0;transform:scaleX(0.9300);">-</span>
<span class="t" style="top:625.48px;font-size:13.6px;color:#000;right:229.07px;transform-origin:100% 0;transform:scaleX(0.9300);">-</span>
<span class="t" style="top:625.48px;font-size:13.6px;color:#000;right:137.07px;transform-origin:100% 0;transform:scaleX(0.9300);">-</span>
<span class="t" style="top:625.48px;font-size:13.6px;color:#000;right:45.07px;transform-origin:100% 0;transform:scaleX(0.9300);">-</span>
<span class="t" style="top:643.89px;font-size:14.3px;color:#0000ff;right:1763.32px;transform-origin:100% 0;transform:scaleX(0.8700);">57</span>
<span class="t" style="top:643.89px;font-size:14.3px;color:#0000ff;left:82.73px;transform-origin:50% 0;transform:scaleX(0.8882);">2026</span>
<span class="t" style="top:643.89px;font-size:14.3px;color:#000;left:133.20px;transform-origin:0 0;transform:scaleX(0.9571);">Contigency provisions</span>
<span class="t" style="top:643.89px;font-size:14.3px;color:#0000ff;right:974.25px;transform-origin:100% 0;transform:scaleX(0.8575);">100%</span>
<span class="t" style="top:644.48px;font-size:13.6px;color:#000;right:597.57px;transform-origin:100% 0;transform:scaleX(0.9300);">14</span>
<span class="t" style="top:644.48px;font-size:13.6px;color:#000;right:505.57px;transform-origin:100% 0;transform:scaleX(0.9300);">25</span>
<span class="t" style="top:644.48px;font-size:13.6px;color:#000;right:413.07px;transform-origin:100% 0;transform:scaleX(0.9300);">-</span>
<span class="t" style="top:644.48px;font-size:13.6px;color:#000;right:321.07px;transform-origin:100% 0;transform:scaleX(0.9300);">-</span>
<span class="t" style="top:644.48px;font-size:13.6px;color:#000;right:229.07px;transform-origin:100% 0;transform:scaleX(0.9300);">-</span>
<span class="t" style="top:644.48px;font-size:13.6px;color:#000;right:137.07px;transform-origin:100% 0;transform:scaleX(0.9300);">-</span>
<span class="t" style="top:644.48px;font-size:13.6px;color:#000;right:45.07px;transform-origin:100% 0;transform:scaleX(0.9300);">-</span>
<span class="t" style="top:756.89px;font-size:14.3px;color:#0000ff;right:1763.32px;transform-origin:100% 0;transform:scaleX(0.8700);">64</span>
<span class="t" style="top:756.89px;font-size:14.3px;color:#0000ff;left:82.73px;transform-origin:50% 0;transform:scaleX(0.8882);">2026</span>
<span class="t" style="top:756.89px;font-size:14.3px;color:#000;left:133.20px;transform-origin:0 0;transform:scaleX(0.9539);">Natural Gas</span>
<span class="t" style="top:756.89px;font-size:14.3px;color:#0000ff;right:974.25px;transform-origin:100% 0;transform:scaleX(0.8575);">100%</span>
<span class="t" style="top:757.48px;font-size:13.6px;color:#000;right:593.65px;transform-origin:100% 0;transform:scaleX(0.9300);">0%</span>
<span class="t" style="top:757.48px;font-size:13.6px;color:#000;right:501.65px;transform-origin:100% 0;transform:scaleX(0.9300);">0%</span>
<span class="t" style="top:757.48px;font-size:13.6px;color:#000;right:409.65px;transform-origin:100% 0;transform:scaleX(0.9300);">5%</span>
<span class="t" style="top:757.48px;font-size:13.6px;color:#000;right:317.65px;transform-origin:100% 0;transform:scaleX(0.9300);">5%</span>
<span class="t" style="top:757.48px;font-size:13.6px;color:#000;right:225.65px;transform-origin:100% 0;transform:scaleX(0.9300);">5%</span>
<span class="t" style="top:757.48px;font-size:13.6px;color:#000;right:133.65px;transform-origin:100% 0;transform:scaleX(0.9300);">5%</span>
<span class="t" style="top:757.48px;font-size:13.6px;color:#000;right:41.65px;transform-origin:100% 0;transform:scaleX(0.9300);">5%</span>
<span class="t" style="top:775.89px;font-size:14.3px;color:#0000ff;right:1763.32px;transform-origin:100% 0;transform:scaleX(0.8700);">65</span>
<span class="t" style="top:775.89px;font-size:14.3px;color:#0000ff;left:82.73px;transform-origin:50% 0;transform:scaleX(0.8882);">2026</span>
<span class="t" style="top:775.89px;font-size:14.3px;color:#000;left:133.20px;transform-origin:0 0;transform:scaleX(0.9667);">Naphtha</span>
<span class="t" style="top:775.89px;font-size:14.3px;color:#0000ff;right:974.25px;transform-origin:100% 0;transform:scaleX(0.8575);">100%</span>
<span class="t" style="top:776.48px;font-size:13.6px;color:#000;right:593.65px;transform-origin:100% 0;transform:scaleX(0.9300);">0%</span>
<span class="t" style="top:776.48px;font-size:13.6px;color:#000;right:501.65px;transform-origin:100% 0;transform:scaleX(0.9300);">0%</span>
<span class="t" style="top:776.48px;font-size:13.6px;color:#000;right:409.65px;transform-origin:100% 0;transform:scaleX(0.9300);">4%</span>
<span class="t" style="top:776.48px;font-size:13.6px;color:#000;right:317.65px;transform-origin:100% 0;transform:scaleX(0.9300);">4%</span>
<span class="t" style="top:776.48px;font-size:13.6px;color:#000;right:225.65px;transform-origin:100% 0;transform:scaleX(0.9300);">4%</span>
<span class="t" style="top:776.48px;font-size:13.6px;color:#000;right:133.65px;transform-origin:100% 0;transform:scaleX(0.9300);">4%</span>
<span class="t" style="top:776.48px;font-size:13.6px;color:#000;right:41.65px;transform-origin:100% 0;transform:scaleX(0.9300);">4%</span>
<span class="t" style="top:794.89px;font-size:14.3px;color:#0000ff;right:1763.32px;transform-origin:100% 0;transform:scaleX(0.8700);">68</span>
<span class="t" style="top:794.89px;font-size:14.3px;color:#0000ff;left:82.73px;transform-origin:50% 0;transform:scaleX(0.8882);">2026</span>
<span class="t" style="top:794.89px;font-size:14.3px;color:#000;left:133.20px;transform-origin:0 0;transform:scaleX(0.9332);">Electricity Costs</span>
<span class="t" style="top:794.89px;font-size:14.3px;color:#0000ff;right:974.25px;transform-origin:100% 0;transform:scaleX(0.8575);">100%</span>
<span class="t" style="top:795.48px;font-size:13.6px;color:#000;right:593.65px;transform-origin:100% 0;transform:scaleX(0.9300);">0%</span>
<span class="t" style="top:795.48px;font-size:13.6px;color:#000;right:501.65px;transform-origin:100% 0;transform:scaleX(0.9300);">0%</span>
<span class="t" style="top:795.48px;font-size:13.6px;color:#000;right:409.65px;transform-origin:100% 0;transform:scaleX(0.9300);">3%</span>
<span class="t" style="top:795.48px;font-size:13.6px;color:#000;right:317.65px;transform-origin:100% 0;transform:scaleX(0.9300);">3%</span>
<span class="t" style="top:795.48px;font-size:13.6px;color:#000;right:225.65px;transform-origin:100% 0;transform:scaleX(0.9300);">3%</span>
<span class="t" style="top:795.48px;font-size:13.6px;color:#000;right:133.65px;transform-origin:100% 0;transform:scaleX(0.9300);">3%</span>
<span class="t" style="top:795.48px;font-size:13.6px;color:#000;right:41.65px;transform-origin:100% 0;transform:scaleX(0.9300);">3%</span>
<span class="t" style="top:813.89px;font-size:14.3px;color:#0000ff;right:1763.32px;transform-origin:100% 0;transform:scaleX(0.8700);">69</span>
<span class="t" style="top:813.89px;font-size:14.3px;color:#0000ff;left:82.73px;transform-origin:50% 0;transform:scaleX(0.8882);">2026</span>
<span class="t" style="top:813.89px;font-size:14.3px;color:#000;left:133.20px;transform-origin:0 0;transform:scaleX(0.9100);">Stream Costs</span>
<span class="t" style="top:813.89px;font-size:14.3px;color:#0000ff;right:974.25px;transform-origin:100% 0;transform:scaleX(0.8575);">100%</span>
<span class="t" style="top:814.48px;font-size:13.6px;color:#000;right:593.65px;transform-origin:100% 0;transform:scaleX(0.9300);">0%</span>
<span class="t" style="top:814.48px;font-size:13.6px;color:#000;right:501.65px;transform-origin:100% 0;transform:scaleX(0.9300);">0%</span>
<span class="t" style="top:814.48px;font-size:13.6px;color:#000;right:409.65px;transform-origin:100% 0;transform:scaleX(0.9300);">3%</span>
<span class="t" style="top:814.48px;font-size:13.6px;color:#000;right:317.65px;transform-origin:100% 0;transform:scaleX(0.9300);">3%</span>
<span class="t" style="top:814.48px;font-size:13.6px;color:#000;right:225.65px;transform-origin:100% 0;transform:scaleX(0.9300);">3%</span>
<span class="t" style="top:814.48px;font-size:13.6px;color:#000;right:133.65px;transform-origin:100% 0;transform:scaleX(0.9300);">3%</span>
<span class="t" style="top:814.48px;font-size:13.6px;color:#000;right:41.65px;transform-origin:100% 0;transform:scaleX(0.9300);">3%</span>
<span class="t" style="top:832.89px;font-size:14.3px;color:#0000ff;right:1763.32px;transform-origin:100% 0;transform:scaleX(0.8700);">72</span>
<span class="t" style="top:832.89px;font-size:14.3px;color:#0000ff;left:82.73px;transform-origin:50% 0;transform:scaleX(0.8882);">2026</span>
<span class="t" style="top:832.89px;font-size:14.3px;color:#000;left:133.20px;transform-origin:0 0;transform:scaleX(0.9330);">Personnel Costs</span>
<span class="t" style="top:832.89px;font-size:14.3px;color:#0000ff;right:974.25px;transform-origin:100% 0;transform:scaleX(0.8575);">100%</span>
<span class="t" style="top:833.48px;font-size:13.6px;color:#000;right:593.65px;transform-origin:100% 0;transform:scaleX(0.9300);">0%</span>
<span class="t" style="top:833.48px;font-size:13.6px;color:#000;right:501.65px;transform-origin:100% 0;transform:scaleX(0.9300);">0%</span>
<span class="t" style="top:833.48px;font-size:13.6px;color:#000;right:409.65px;transform-origin:100% 0;transform:scaleX(0.9300);">3%</span>
<span class="t" style="top:833.48px;font-size:13.6px;color:#000;right:317.65px;transform-origin:100% 0;transform:scaleX(0.9300);">3%</span>
<span class="t" style="top:833.48px;font-size:13.6px;color:#000;right:225.65px;transform-origin:100% 0;transform:scaleX(0.9300);">3%</span>
<span class="t" style="top:833.48px;font-size:13.6px;color:#000;right:133.65px;transform-origin:100% 0;transform:scaleX(0.9300);">3%</span>
<span class="t" style="top:833.48px;font-size:13.6px;color:#000;right:41.65px;transform-origin:100% 0;transform:scaleX(0.9300);">3%</span>
<span class="t" style="top:851.89px;font-size:14.3px;color:#0000ff;right:1763.32px;transform-origin:100% 0;transform:scaleX(0.8700);">73</span>
<span class="t" style="top:851.89px;font-size:14.3px;color:#0000ff;left:82.73px;transform-origin:50% 0;transform:scaleX(0.8882);">2026</span>
<span class="t" style="top:851.89px;font-size:14.3px;color:#000;left:133.20px;transform-origin:0 0;transform:scaleX(0.9245);">Other Direct Costs</span>
<span class="t" style="top:851.89px;font-size:14.3px;color:#0000ff;right:974.25px;transform-origin:100% 0;transform:scaleX(0.8575);">100%</span>
<span class="t" style="top:852.48px;font-size:13.6px;color:#000;right:593.65px;transform-origin:100% 0;transform:scaleX(0.9300);">0%</span>
<span class="t" style="top:852.48px;font-size:13.6px;color:#000;right:501.65px;transform-origin:100% 0;transform:scaleX(0.9300);">0%</span>
<span class="t" style="top:852.48px;font-size:13.6px;color:#000;right:409.65px;transform-origin:100% 0;transform:scaleX(0.9300);">4%</span>
<span class="t" style="top:852.48px;font-size:13.6px;color:#000;right:317.65px;transform-origin:100% 0;transform:scaleX(0.9300);">4%</span>
<span class="t" style="top:852.48px;font-size:13.6px;color:#000;right:225.65px;transform-origin:100% 0;transform:scaleX(0.9300);">4%</span>
<span class="t" style="top:852.48px;font-size:13.6px;color:#000;right:133.65px;transform-origin:100% 0;transform:scaleX(0.9300);">4%</span>
<span class="t" style="top:852.48px;font-size:13.6px;color:#000;right:41.65px;transform-origin:100% 0;transform:scaleX(0.9300);">4%</span>
<span class="t" style="top:870.89px;font-size:14.3px;color:#0000ff;right:1763.32px;transform-origin:100% 0;transform:scaleX(0.8700);">76</span>
<span class="t" style="top:870.89px;font-size:14.3px;color:#0000ff;left:82.73px;transform-origin:50% 0;transform:scaleX(0.8882);">2026</span>
<span class="t" style="top:870.89px;font-size:14.3px;color:#000;left:133.20px;transform-origin:0 0;transform:scaleX(0.9496);">Plant Maintenance Costs</span>
<span class="t" style="top:870.89px;font-size:14.3px;color:#0000ff;right:974.25px;transform-origin:100% 0;transform:scaleX(0.8575);">100%</span>
<span class="t" style="top:871.48px;font-size:13.6px;color:#000;right:593.65px;transform-origin:100% 0;transform:scaleX(0.9300);">0%</span>
<span class="t" style="top:871.48px;font-size:13.6px;color:#000;right:501.65px;transform-origin:100% 0;transform:scaleX(0.9300);">0%</span>
<span class="t" style="top:871.48px;font-size:13.6px;color:#000;right:409.65px;transform-origin:100% 0;transform:scaleX(0.9300);">2%</span>
<span class="t" style="top:871.48px;font-size:13.6px;color:#000;right:317.65px;transform-origin:100% 0;transform:scaleX(0.9300);">2%</span>
<span class="t" style="top:871.48px;font-size:13.6px;color:#000;right:225.65px;transform-origin:100% 0;transform:scaleX(0.9300);">2%</span>
<span class="t" style="top:871.48px;font-size:13.6px;color:#000;right:133.65px;transform-origin:100% 0;transform:scaleX(0.9300);">2%</span>
<span class="t" style="top:871.48px;font-size:13.6px;color:#000;right:41.65px;transform-origin:100% 0;transform:scaleX(0.9300);">2%</span>
</div>
<div style="left:65px;top:24px;width:31px;height:18px;border:2px solid #1e7145;box-shadow:inset 0 0 0 1px #fff;background:none"></div>
<div style="left:95px;top:41px;width:5px;height:5px;background:#1e7145;border-left:1px solid #fff;border-top:1px solid #fff"></div>
<div style="left:1894px;top:0px;width:27px;height:906px;background:#e6e6e6;"></div>
<div style="left:1894px;top:25px;width:1px;height:881px;background:#a0a0a0;"></div>
<div style="left:1898px;top:8px;width:19px;height:898px;background:#f1f1f1;"></div>
<div style="left:1898px;top:8px;width:17px;height:17px;border:1px solid #a6a6a6;background:#fff"></div>
<svg style="left:1898px;top:8px" width="19" height="19"><path d="M5 11L9.5 5.7L14 11Z" fill="#222"/></svg>
<div style="left:1898px;top:27px;width:17px;height:176px;border:1px solid #a6a6a6;background:#fff"></div>
<div style="left:1898px;top:887px;width:17px;height:17px;border:1px solid #a6a6a6;background:#fff"></div>
<svg style="left:1898px;top:887px" width="19" height="19"><path d="M5 8L9.5 13.3L14 8Z" fill="#222"/></svg>
<div style="left:0px;top:907px;width:1921px;height:31px;background:#e6e6e6;"></div>
<div style="left:0;top:906px;width:1921px;height:1px;background:#a0a0a0"></div>
<div style="left:0;top:938px;width:1921px;height:1px;background:#cfcfcf"></div>
<svg style="left:26px;top:914px" width="46" height="18"><path d="M9.5 2.5V13.5L4 8Z" fill="#c6c6c6"/><path d="M35.5 3V13.5L41.5 8.2Z" fill="#1e7145"/></svg>
<div style="left:112px;top:910px;width:1px;height:24px;background:#ababab"></div>
<span class="t" style="top:911.83px;font-size:16.5px;color:#444;left:124.10px;transform-origin:0 0;transform:scaleX(0.9092);">COVER</span>
<div style="left:191px;top:910px;width:1px;height:24px;background:#ababab"></div>
<div style="left:194px;top:909px;width:89px;height:26px;background:#001f5f;"></div>
<span class="t" style="top:911.83px;font-size:16.5px;color:#fff;left:205.10px;transform-origin:0 0;transform:scaleX(0.9274);">README</span>
<div style="left:285px;top:910px;width:1px;height:24px;background:#ababab"></div>
<div style="left:288px;top:909px;width:127px;height:26px;background:#001f5f;"></div>
<span class="t" style="top:911.83px;font-size:16.5px;color:#fff;left:301.10px;transform-origin:0 0;transform:scaleX(0.9435);">DASHBOARD</span>
<div style="left:417px;top:910px;width:1px;height:24px;background:#ababab"></div>
<div style="left:420px;top:909px;width:121px;height:26px;background:#ffc000;"></div>
<span class="t" style="top:911.83px;font-size:16.5px;color:#111;left:431.40px;transform-origin:0 0;transform:scaleX(0.8925);">KEY_INPUTS</span>
<div style="left:543px;top:910px;width:1px;height:24px;background:#ababab"></div>
<div style="left:546px;top:909px;width:104px;height:26px;background:#ffc000;"></div>
<span class="t" style="top:911.83px;font-size:16.5px;color:#111;left:561.10px;transform-origin:0 0;transform:scaleX(0.9464);">CONTROL</span>
<div style="left:652px;top:906px;width:172px;height:27px;background:#fff;border-left:1px solid #ababab;border-right:1px solid #ababab"></div>
<div style="left:655px;top:909px;width:168px;height:24px;background:linear-gradient(#fff 0,#fff 20%,#fdf0cf 75%,#fbe2a4 100%)"></div>
<div style="left:652px;top:933px;width:174px;height:2px;background:#1e7145;"></div>
<span class="t" style="top:911.83px;font-size:16.5px;color:#1e7145;font-weight:700;left:664.10px;transform-origin:0 0;transform:scaleX(0.9821);">MODEL SCENARIO</span>
<div style="left:828px;top:909px;width:184px;height:26px;background:#ffc000;"></div>
<span class="t" style="top:911.83px;font-size:16.5px;color:#111;left:845.20px;transform-origin:0 0;transform:scaleX(0.9620);">OPERATING MODEL</span>
<div style="left:1014px;top:910px;width:1px;height:24px;background:#ababab"></div>
<div style="left:1017px;top:909px;width:55px;height:26px;overflow:hidden;background:#ffc000">
<span class="t" style="top:2.83px;font-size:16.5px;color:#111;left:11.20px;transform-origin:0 0;transform:scaleX(0.9050);">DEPRECIATION</span>
</div>
<div style="left:1082px;top:924px;width:2px;height:2px;background:#1e7145;"></div>
<div style="left:1087px;top:924px;width:2px;height:2px;background:#1e7145;"></div>
<div style="left:1092px;top:924px;width:2px;height:2px;background:#1e7145;"></div>
<svg style="left:1108px;top:911px" width="24" height="24"><circle cx="12" cy="12" r="9.3" fill="none" stroke="#7a7a7a" stroke-width="1.2"/><path d="M7 12H17M12 7V17" stroke="#6a6a6a" stroke-width="1.6"/></svg>
<div style="left:1150px;top:916px;width:3px;height:3px;background:#b5b5b5;"></div>
<div style="left:1150px;top:921px;width:3px;height:3px;background:#b5b5b5;"></div>
<div style="left:1150px;top:926px;width:3px;height:3px;background:#b5b5b5;"></div>
<div style="left:1170px;top:913px;width:722px;height:19px;background:#f1f1f1;"></div>
<div style="left:1170px;top:913px;width:17px;height:17px;border:1px solid #a6a6a6;background:#fff"></div>
<svg style="left:1170px;top:913px" width="19" height="19"><path d="M11.5 5L6.2 9.5L11.5 14Z" fill="#222"/></svg>
<div style="left:1189px;top:913px;width:539px;height:17px;border:1px solid #a6a6a6;background:#fff"></div>
<div style="left:1873px;top:913px;width:17px;height:17px;border:1px solid #a6a6a6;background:#fff"></div>
<svg style="left:1873px;top:913px" width="19" height="19"><path d="M7.5 5L12.8 9.5L7.5 14Z" fill="#222"/></svg>
<div style="left:0px;top:939px;width:1921px;height:26px;background:#f3f3f3;"></div>
<div style="left:0px;top:965px;width:1921px;height:1px;background:#6e6e6e;"></div>
<span class="t" style="top:946.22px;font-size:12.5px;color:#333;left:14.10px;transform-origin:0 0;transform:scaleX(0.9689);">Ready</span>
<span class="t" style="top:946.22px;font-size:12.5px;color:#333;left:71.10px;transform-origin:0 0;transform:scaleX(0.9746);">Calculate</span>
<svg style="left:149px;top:943px" width="18" height="17"><path d="M2.5 2.5H15.5V15.5H2.5Z" fill="#fff" stroke="#5a5a5a" stroke-width="1"/><path d="M9.4 2H16V5.5H9.4Z" fill="#5a5a5a"/><circle cx="4.6" cy="4.4" r="3.4" fill="#5a5a5a"/><path d="M8.2 7.5H10.2M11.4 7.5H13.4M5 10.5H7M8.2 10.5H10.2M11.4 10.5H13.4M5 13.3H7M8.2 13.3H10.2M11.4 13.3H13.4" stroke="#5a5a5a" stroke-width="1"/></svg>
<svg style="left:187px;top:942px" width="24" height="22"><path d="M8.4 3.6A6.6 6.6 0 0 0 9.8 16.8" fill="none" stroke="#555" stroke-width="1.1" stroke-dasharray="3.4 1.7"/><path d="M9.5 2V10.3M7.3 8L9.5 10.6L11.7 8" fill="none" stroke="#555" stroke-width="1.1"/><path d="M13 8.4H17.6M15.6 6.3L17.8 8.4L15.6 10.5" fill="none" stroke="#555" stroke-width="1.1"/><path d="M11.6 11.6L20.6 19.6" stroke="#444" stroke-width="1.15"/><path d="M20.3 12L11.8 19.6" stroke="#444" stroke-width="2"/></svg>
<span class="t" style="top:946.22px;font-size:12.5px;color:#111;font-weight:700;left:210.20px;transform-origin:0 0;transform:scaleX(1.0122);">Accessibility: Investigate</span>
<div style="left:1547px;top:939px;width:50px;height:26px;background:#c6c6c6;"></div>
<svg style="left:1564px;top:944px" width="16" height="16"><path d="M.5 .5H15.5V15.5H.5ZM.5 5.5H15.5M.5 10.5H15.5M5.5 .5V15.5M10.5 .5V15.5" fill="none" stroke="#6a6a6a" stroke-width="1"/></svg>
<svg style="left:1613px;top:944px" width="17" height="15"><path d="M.5 .5H16.5V14.5H.5Z" fill="#fff" stroke="#6a6a6a" stroke-width="1"/><path d="M4.5 2.5H12.5V12.5H4.5Z" fill="#fff" stroke="#6a6a6a" stroke-width="1"/><path d="M6.5 5.5H10.5M6.5 7.5H10.5M6.5 9.5H10.5" stroke="#6a6a6a" stroke-width="1"/></svg>
<svg style="left:1663px;top:944px" width="17" height="16"><path d="M.5 .5H16.5V15.5H.5Z" fill="#fff" stroke="#6a6a6a" stroke-width="1"/><path d="M5.5 .5V9.5M10.5 .5V9.5H.5" fill="none" stroke="#6a6a6a" stroke-width="1"/></svg>
<div style="left:1704px;top:951px;width:10px;height:1px;background:#444;"></div>
<div style="left:1720px;top:952px;width:125px;height:1px;background:#555;"></div>
<div style="left:1767px;top:945px;width:6px;height:14px;background:#444;"></div>
<div style="left:1782px;top:948px;width:1px;height:9px;background:#555;"></div>
<div style="left:1851px;top:951px;width:10px;height:1px;background:#444;"></div>
<div style="left:1855px;top:947px;width:1px;height:10px;background:#444;"></div>
<span class="t" style="top:946.22px;font-size:12.5px;color:#444;left:1877.10px;transform-origin:0 0;transform:scaleX(0.9400);">80%</span>
<div style="left:1919px;top:0px;width:1px;height:965px;background:#f4f4f4;"></div>
<div style="left:1920px;top:0px;width:1px;height:966px;background:#111;"></div>
</body></html>
